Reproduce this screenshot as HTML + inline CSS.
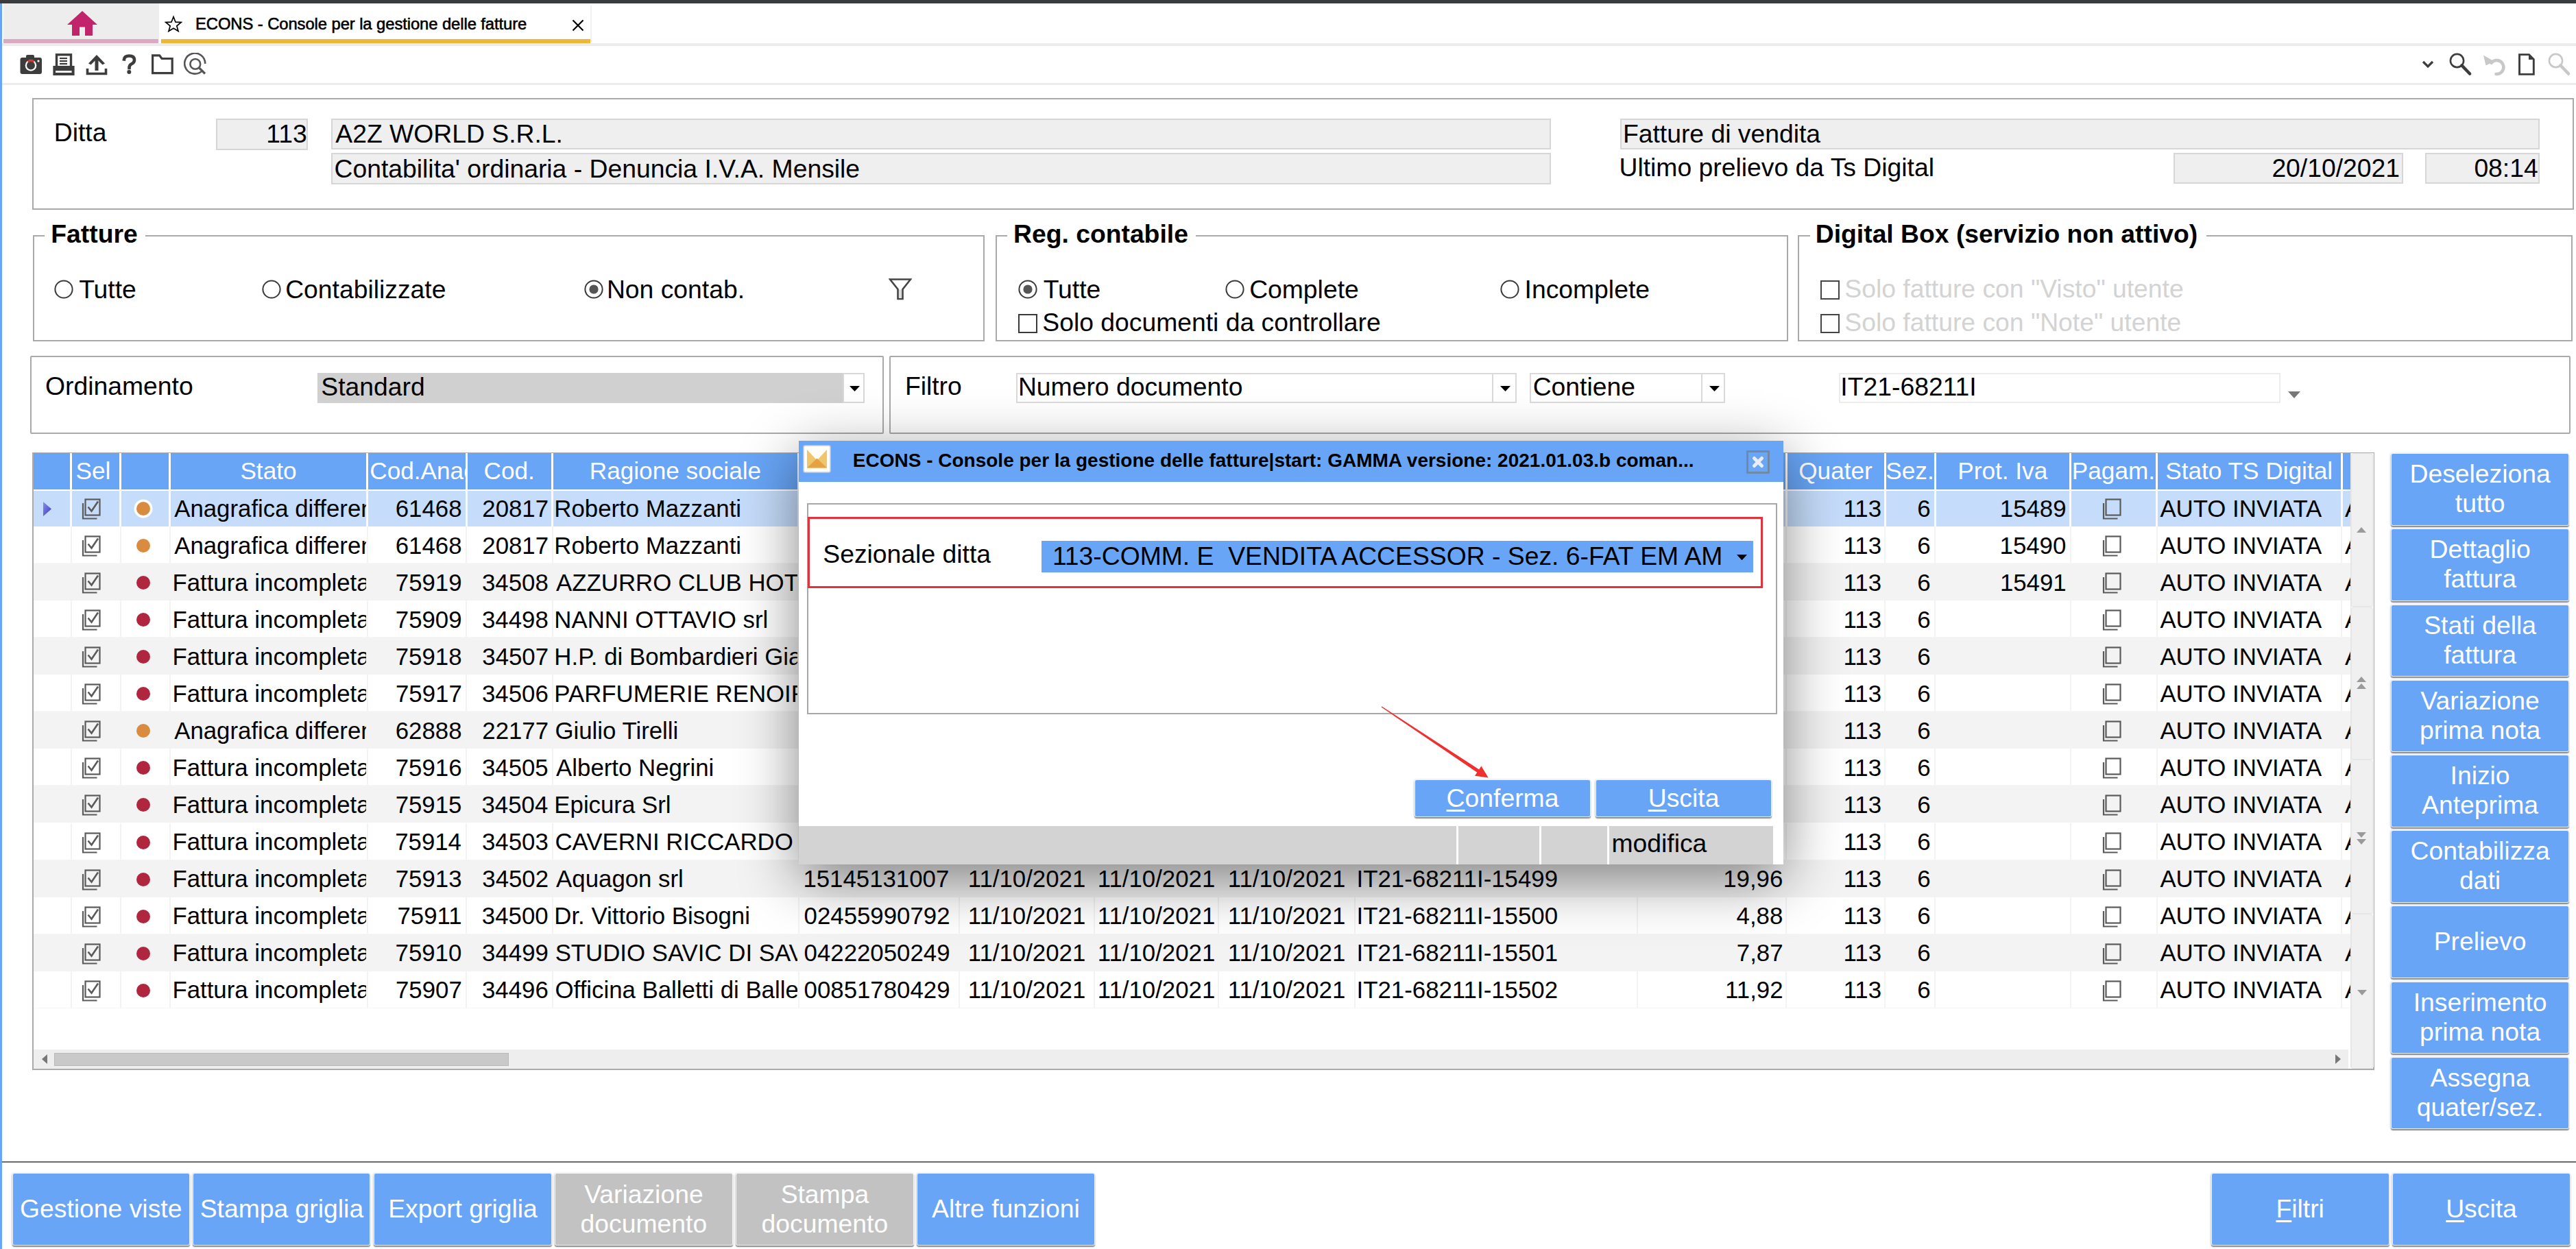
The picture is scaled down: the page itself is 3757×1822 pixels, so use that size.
<!DOCTYPE html>
<html><head><meta charset="utf-8"><title>ECONS</title>
<style>
html,body{margin:0;padding:0;background:#fff;width:3757px;height:1822px;overflow:hidden;}
body{position:relative;font-family:"Liberation Sans",sans-serif;}
.r{position:absolute;display:block;}
.t{position:absolute;white-space:nowrap;line-height:1;}
</style></head><body>
<div class="r" style="left:0.00px;top:0.00px;width:3757.00px;height:5.00px;background:#3a3b3d"></div>
<div class="r" style="left:0.00px;top:5.00px;width:3.00px;height:1817.00px;background:#68a5f6"></div>
<div class="r" style="left:5.00px;top:5.00px;width:227.00px;height:52.00px;background:#ededed"></div>
<div class="r" style="left:5.00px;top:57.00px;width:226.00px;height:5.50px;background:#dba9c0"></div>
<div class="r" style="left:235.00px;top:57.00px;width:625.50px;height:5.50px;background:#efb736"></div>
<div class="r" style="left:861.00px;top:8.00px;width:2.00px;height:54.00px;background:#f0f0f0"></div>
<div class="r" style="left:3.00px;top:62.50px;width:3754.00px;height:4.00px;background:#ececec"></div>
<svg class="r" style="left:96px;top:14px;" width="48" height="40" viewBox="0 0 48 40"><path d="M24 2 L46 22 L39 22 L39 38 L28 38 L28 25.6 L20 25.6 L20 38 L9 38 L9 22 L2 22 Z" fill="#c2246b"/></svg>
<svg class="r" style="left:240px;top:22px;" width="26" height="25" viewBox="0 0 26 25"><path d="M13 2.5 L16 10.2 L24.2 10.6 L17.8 15.8 L20 23.5 L13 19.2 L6 23.5 L8.2 15.8 L1.8 10.6 L10 10.2 Z" fill="none" stroke="#000" stroke-width="1.7" stroke-linejoin="miter"/></svg>
<div class="t" style="left:285.30px;top:23.46px;font-size:24.5px;color:#000;-webkit-text-stroke:0.6px #000;letter-spacing:-0.1px;transform:scaleX(0.973);transform-origin:0 0">ECONS - Console per la gestione delle fatture</div>
<svg class="r" style="left:833px;top:27px;" width="20" height="20" viewBox="0 0 20 20"><path d="M2.5 2.5 L17.5 17.5 M17.5 2.5 L2.5 17.5" stroke="#000" stroke-width="2.2"/></svg>
<svg class="r" style="left:29px;top:79px;" width="33" height="30" viewBox="0 0 33 30"><rect x="0.5" y="5" width="31.5" height="24" rx="3" fill="#3d3d3d"/><rect x="9" y="1" width="12" height="6" rx="2" fill="#3d3d3d"/><circle cx="16" cy="16.5" r="8.3" fill="#fff"/><circle cx="16" cy="16.5" r="6" fill="#3d3d3d"/><path d="M11 9.5 Q16 7 21 9.5 L20 12 Q16 10.5 12 12 Z" fill="#d0312d"/><circle cx="27" cy="10" r="1.6" fill="#fff"/></svg>
<svg class="r" style="left:77px;top:78px;" width="32" height="32" viewBox="0 0 32 32"><rect x="5.5" y="1.8" width="21" height="19" fill="none" stroke="#3d3d3d" stroke-width="3.4"/><rect x="10" y="6" width="11" height="2.2" fill="#3d3d3d"/><rect x="10" y="10" width="11" height="2.2" fill="#3d3d3d"/><rect x="10" y="14" width="11" height="2.2" fill="#3d3d3d"/><path d="M0.4 18 H31.6 V32 H0.4 Z M4 25.2 V28 H27.6 V25.2 Z" fill="#3d3d3d" fill-rule="evenodd"/></svg>
<svg class="r" style="left:125px;top:79px;" width="32" height="31" viewBox="0 0 32 31"><path d="M16 1 L28 13.5 L24.5 15.5 L18.5 9.5 L18.5 24 L13.5 24 L13.5 9.5 L7.5 15.5 L4 13.5 Z" fill="#3d3d3d"/><path d="M2.5 21 V28.5 H29.5 V21" fill="none" stroke="#3d3d3d" stroke-width="3.6"/></svg>
<svg class="r" style="left:176px;top:78px;" width="26" height="31" viewBox="0 0 26 31"><path d="M5 8.5 Q5.5 3.5 12.5 3.5 Q20 3.5 20 9.5 Q20 13.5 15.5 15.5 Q12.5 17 12.5 21" fill="none" stroke="#3d3d3d" stroke-width="4.6" stroke-linecap="square"/><circle cx="12.3" cy="27" r="3" fill="#3d3d3d"/></svg>
<svg class="r" style="left:221px;top:79px;" width="32" height="30" viewBox="0 0 32 30"><path d="M1.6 1.8 H11.6 L15 6.5 H30.2 V27.6 H1.6 Z" fill="none" stroke="#3d3d3d" stroke-width="3.2" stroke-linejoin="miter"/></svg>
<svg class="r" style="left:268px;top:77px;" width="34" height="33" viewBox="0 0 34 33"><path d="M27.5 25.5 A15 15 0 1 1 31.2 16" fill="none" stroke="#555" stroke-width="2.6"/><circle cx="16.8" cy="16.4" r="7.4" fill="none" stroke="#555" stroke-width="2.6"/><path d="M22 21.5 L31 30.5" stroke="#555" stroke-width="3.2"/></svg>
<svg class="r" style="left:3531px;top:87px;" width="20" height="14" viewBox="0 0 20 14"><path d="M3 3 L10 10 L17 3" fill="none" stroke="#3d3d3d" stroke-width="3.2"/></svg>
<svg class="r" style="left:3571px;top:77px;" width="36" height="34" viewBox="0 0 36 34"><circle cx="12.5" cy="11.5" r="9.6" fill="none" stroke="#3d3d3d" stroke-width="2.6"/><path d="M19.5 18.5 L31 30.5" stroke="#3d3d3d" stroke-width="4.6" stroke-linecap="round"/></svg>
<svg class="r" style="left:3619px;top:77px;" width="36" height="34" viewBox="0 0 36 34"><path d="M14.5 14.8 A10 10 0 1 1 21.5 31" fill="none" stroke="#c8c8c8" stroke-width="4.6" stroke-linecap="round"/><path d="M3 3.5 L6.5 18.5 L18.5 12.5 Z" fill="#c8c8c8"/></svg>
<svg class="r" style="left:3671px;top:77px;" width="28" height="34" viewBox="0 0 28 34"><path d="M3.5 2.6 H17.5 L24.3 9.5 V31.4 H3.5 Z" fill="none" stroke="#3d3d3d" stroke-width="2.9" stroke-linejoin="miter"/><path d="M17 2 L25 10 L17 10 Z" fill="#3d3d3d"/></svg>
<svg class="r" style="left:3715px;top:77px;" width="36" height="34" viewBox="0 0 36 34"><circle cx="12.5" cy="11.5" r="9.6" fill="none" stroke="#c8c8c8" stroke-width="2.6"/><path d="M19.5 18.5 L31 30.5" stroke="#c8c8c8" stroke-width="4.6" stroke-linecap="round"/></svg>
<div class="r" style="left:3.00px;top:121.00px;width:3754.00px;height:2.50px;background:#ececec"></div>
<div class="r" style="left:47.00px;top:143.00px;width:3707.00px;height:163.00px;border:2px solid #a9a9a9;box-sizing:border-box"></div>
<div class="t" style="left:78.72px;top:175.43px;font-size:37.3px;color:#000;">Ditta</div>
<div class="r" style="left:315.00px;top:173.20px;width:133.80px;height:45.50px;background:#efefef;border:2px solid #d6d6d6;box-sizing:border-box"></div>
<div class="t" style="left:388.19px;top:177.43px;font-size:37.3px;color:#000;">113</div>
<div class="r" style="left:483.20px;top:173.20px;width:1778.80px;height:45.30px;background:#efefef;border:2px solid #d6d6d6;box-sizing:border-box"></div>
<div class="t" style="left:489.31px;top:177.43px;font-size:37.3px;color:#000;">A2Z WORLD S.R.L.</div>
<div class="r" style="left:483.20px;top:223.20px;width:1778.80px;height:45.50px;background:#efefef;border:2px solid #d6d6d6;box-sizing:border-box"></div>
<div class="t" style="left:487.53px;top:227.63px;font-size:37.3px;color:#000;">Contabilita&#x27; ordinaria - Denuncia I.V.A. Mensile</div>
<div class="r" style="left:2363.00px;top:173.40px;width:1341.20px;height:44.60px;background:#efefef;border:2px solid #d6d6d6;box-sizing:border-box"></div>
<div class="t" style="left:2366.92px;top:177.23px;font-size:37.3px;color:#000;">Fatture di vendita</div>
<div class="t" style="left:2361.51px;top:226.23px;font-size:37.3px;color:#000;">Ultimo prelievo da Ts Digital</div>
<div class="r" style="left:3169.60px;top:223.20px;width:335.00px;height:45.20px;background:#efefef;border:2px solid #d6d6d6;box-sizing:border-box"></div>
<div class="t" style="left:3313.39px;top:227.43px;font-size:37.3px;color:#000;">20/10/2021</div>
<div class="r" style="left:3537.20px;top:223.20px;width:167.00px;height:45.20px;background:#efefef;border:2px solid #d6d6d6;box-sizing:border-box"></div>
<div class="t" style="left:3608.38px;top:227.43px;font-size:37.3px;color:#000;">08:14</div>
<div class="r" style="left:47.70px;top:343.00px;width:1388.30px;height:154.50px;border:2px solid #a9a9a9;box-sizing:border-box"></div>
<div class="r" style="left:64.70px;top:340.00px;width:147.30px;height:7.00px;background:#fff"></div>
<div class="t" style="left:74.28px;top:323.43px;font-size:37.3px;color:#000;font-weight:bold;">Fatture</div>
<div class="r" style="left:1451.60px;top:343.00px;width:1156.40px;height:154.50px;border:2px solid #a9a9a9;box-sizing:border-box"></div>
<div class="r" style="left:1469.00px;top:340.00px;width:274.70px;height:7.00px;background:#fff"></div>
<div class="t" style="left:1477.98px;top:323.43px;font-size:37.3px;color:#000;font-weight:bold;">Reg. contabile</div>
<div class="r" style="left:2621.60px;top:343.00px;width:1130.40px;height:154.50px;border:2px solid #a9a9a9;box-sizing:border-box"></div>
<div class="r" style="left:2639.50px;top:340.00px;width:578.00px;height:7.00px;background:#fff"></div>
<div class="t" style="left:2647.78px;top:323.43px;font-size:37.3px;color:#000;font-weight:bold;">Digital Box (servizio non attivo)</div>
<svg class="r" style="left:79.0px;top:407.8px;" width="28" height="28" viewBox="0 0 28 28"><circle cx="14" cy="14" r="12.6" fill="#fff" stroke="#3a3a3a" stroke-width="2"/></svg>
<div class="t" style="left:115.16px;top:403.63px;font-size:37.3px;color:#000;">Tutte</div>
<svg class="r" style="left:381.5px;top:407.8px;" width="28" height="28" viewBox="0 0 28 28"><circle cx="14" cy="14" r="12.6" fill="#fff" stroke="#3a3a3a" stroke-width="2"/></svg>
<div class="t" style="left:416.13px;top:403.63px;font-size:37.3px;color:#000;">Contabilizzate</div>
<svg class="r" style="left:851.5px;top:407.8px;" width="28" height="28" viewBox="0 0 28 28"><circle cx="14" cy="14" r="12.6" fill="#fff" stroke="#3a3a3a" stroke-width="2"/><circle cx="14" cy="14" r="6.6" fill="#555"/></svg>
<div class="t" style="left:884.92px;top:403.63px;font-size:37.3px;color:#000;">Non contab.</div>
<svg class="r" style="left:1296px;top:405px;" width="34" height="34" viewBox="0 0 34 34"><path d="M2 2.5 H32 L20.5 17 V31 H13.5 V17 Z" fill="none" stroke="#444" stroke-width="2.6" stroke-linejoin="miter"/><path d="M15 17.5 H19 V30 H15 Z" fill="#ddd"/></svg>
<svg class="r" style="left:1484.5px;top:407.8px;" width="28" height="28" viewBox="0 0 28 28"><circle cx="14" cy="14" r="12.6" fill="#fff" stroke="#3a3a3a" stroke-width="2"/><circle cx="14" cy="14" r="6.6" fill="#555"/></svg>
<div class="t" style="left:1521.66px;top:403.63px;font-size:37.3px;color:#000;">Tutte</div>
<svg class="r" style="left:1786.5px;top:407.8px;" width="28" height="28" viewBox="0 0 28 28"><circle cx="14" cy="14" r="12.6" fill="#fff" stroke="#3a3a3a" stroke-width="2"/></svg>
<div class="t" style="left:1822.13px;top:403.63px;font-size:37.3px;color:#000;">Complete</div>
<svg class="r" style="left:2188.1px;top:407.8px;" width="28" height="28" viewBox="0 0 28 28"><circle cx="14" cy="14" r="12.6" fill="#fff" stroke="#3a3a3a" stroke-width="2"/></svg>
<div class="t" style="left:2223.55px;top:403.63px;font-size:37.3px;color:#000;">Incomplete</div>
<svg class="r" style="left:1485px;top:458px;" width="28" height="28" viewBox="0 0 28 28"><rect x="1" y="1" width="26" height="26" fill="#fff" stroke="#3a3a3a" stroke-width="2"/></svg>
<div class="t" style="left:1520.32px;top:451.93px;font-size:37.3px;color:#000;">Solo documenti da controllare</div>
<svg class="r" style="left:2655px;top:408.5px;" width="28" height="28" viewBox="0 0 28 28"><rect x="1" y="1" width="26" height="26" fill="#fff" stroke="#444" stroke-width="2"/></svg>
<div class="t" style="left:2690.32px;top:402.93px;font-size:37.3px;color:#d3d3d3;">Solo fatture con &quot;Visto&quot; utente</div>
<svg class="r" style="left:2655px;top:458px;" width="28" height="28" viewBox="0 0 28 28"><rect x="1" y="1" width="26" height="26" fill="#fff" stroke="#444" stroke-width="2"/></svg>
<div class="t" style="left:2690.32px;top:451.93px;font-size:37.3px;color:#d3d3d3;">Solo fatture con &quot;Note&quot; utente</div>
<div class="r" style="left:43.60px;top:519.00px;width:1245.00px;height:113.80px;border:2px solid #a9a9a9;box-sizing:border-box;border-radius:2px"></div>
<div class="t" style="left:66.03px;top:545.13px;font-size:37.3px;color:#000;">Ordinamento</div>
<div class="r" style="left:463.00px;top:544.00px;width:798.40px;height:44.30px;background:#d0d0d0"></div>
<div class="r" style="left:1228.60px;top:544.00px;width:32.80px;height:44.30px;background:#fff;border:2px solid #d8d8d8;box-sizing:border-box"></div>
<svg class="r" style="left:1238.7px;top:563px;" width="15" height="8" viewBox="0 0 15 8"><path d="M0 0 H15 L7.5 8 Z" fill="#000"/></svg>
<div class="t" style="left:468.32px;top:546.43px;font-size:37.3px;color:#000;">Standard</div>
<div class="r" style="left:1296.80px;top:519.00px;width:2452.20px;height:113.80px;border:2px solid #a9a9a9;box-sizing:border-box;border-radius:2px"></div>
<div class="t" style="left:1319.92px;top:544.93px;font-size:37.3px;color:#000;">Filtro</div>
<div class="r" style="left:1481.90px;top:544.00px;width:730.10px;height:44.30px;background:#fff;border:2px solid #dadada;box-sizing:border-box"></div>
<div class="r" style="left:2176.00px;top:544.00px;width:2.00px;height:44.30px;background:#dadada"></div>
<svg class="r" style="left:2188.4px;top:563px;" width="15" height="8" viewBox="0 0 15 8"><path d="M0 0 H15 L7.5 8 Z" fill="#000"/></svg>
<div class="t" style="left:1484.92px;top:546.43px;font-size:37.3px;color:#000;">Numero documento</div>
<div class="r" style="left:2231.00px;top:544.00px;width:285.40px;height:44.30px;background:#fff;border:2px solid #dadada;box-sizing:border-box"></div>
<div class="r" style="left:2481.00px;top:544.00px;width:2.00px;height:44.30px;background:#dadada"></div>
<svg class="r" style="left:2492.7px;top:563px;" width="15" height="8" viewBox="0 0 15 8"><path d="M0 0 H15 L7.5 8 Z" fill="#000"/></svg>
<div class="t" style="left:2235.64px;top:546.43px;font-size:37.3px;color:#000;">Contiene</div>
<div class="r" style="left:2681.70px;top:544.00px;width:644.10px;height:44.30px;background:#fff;border:2px solid #ececec;box-sizing:border-box"></div>
<div class="t" style="left:2684.35px;top:546.43px;font-size:37.3px;color:#000;">IT21-68211I</div>
<svg class="r" style="left:3337.4px;top:570.6px;" width="18" height="10" viewBox="0 0 18 10"><path d="M0 0 H18 L9.0 10 Z" fill="#777"/></svg>
<div class="r" style="left:46.50px;top:659.50px;width:3416.00px;height:901.00px;border:2px solid #ababab;box-sizing:border-box;background:#fff"></div>
<div class="r" style="left:49.00px;top:661.00px;width:3380.00px;height:52.50px;background:#68a5f6"></div>
<div class="r" style="left:102.00px;top:661.00px;width:3.00px;height:55.00px;background:#fff"></div>
<div class="r" style="left:174.00px;top:661.00px;width:3.00px;height:55.00px;background:#fff"></div>
<div class="r" style="left:246.00px;top:661.00px;width:3.00px;height:55.00px;background:#fff"></div>
<div class="r" style="left:534.00px;top:661.00px;width:3.00px;height:55.00px;background:#fff"></div>
<div class="r" style="left:678.50px;top:661.00px;width:3.00px;height:55.00px;background:#fff"></div>
<div class="r" style="left:804.00px;top:661.00px;width:3.00px;height:55.00px;background:#fff"></div>
<div class="r" style="left:1163.00px;top:661.00px;width:3.00px;height:55.00px;background:#fff"></div>
<div class="r" style="left:1397.50px;top:661.00px;width:3.00px;height:55.00px;background:#fff"></div>
<div class="r" style="left:1594.50px;top:661.00px;width:3.00px;height:55.00px;background:#fff"></div>
<div class="r" style="left:1775.50px;top:661.00px;width:3.00px;height:55.00px;background:#fff"></div>
<div class="r" style="left:1974.50px;top:661.00px;width:3.00px;height:55.00px;background:#fff"></div>
<div class="r" style="left:2386.50px;top:661.00px;width:3.00px;height:55.00px;background:#fff"></div>
<div class="r" style="left:2603.50px;top:661.00px;width:3.00px;height:55.00px;background:#fff"></div>
<div class="r" style="left:2747.50px;top:661.00px;width:3.00px;height:55.00px;background:#fff"></div>
<div class="r" style="left:2820.50px;top:661.00px;width:3.00px;height:55.00px;background:#fff"></div>
<div class="r" style="left:3018.00px;top:661.00px;width:3.00px;height:55.00px;background:#fff"></div>
<div class="r" style="left:3144.00px;top:661.00px;width:3.00px;height:55.00px;background:#fff"></div>
<div class="r" style="left:3413.50px;top:661.00px;width:3.00px;height:55.00px;background:#fff"></div>
<div class="r" style="left:49.00px;top:713.50px;width:3380.00px;height:2.50px;background:#fff"></div>
<div class="t" style="left:105.00px;top:668.70px;width:69.00px;height:42px;overflow:hidden;font-size:35.2px;color:#fff"><span style="position:absolute;top:0;left:5.42px">Sel</span></div>
<div class="t" style="left:249.00px;top:668.70px;width:285.00px;height:42px;overflow:hidden;font-size:35.2px;color:#fff"><span style="position:absolute;top:0;left:101.40px">Stato</span></div>
<div class="t" style="left:537.00px;top:668.70px;width:141.50px;height:42px;overflow:hidden;font-size:35.2px;color:#fff"><span style="position:absolute;top:0;left:2.24px">Cod.Anag</span></div>
<div class="t" style="left:681.50px;top:668.70px;width:122.50px;height:42px;overflow:hidden;font-size:35.2px;color:#fff"><span style="position:absolute;top:0;left:24.07px">Cod.</span></div>
<div class="t" style="left:807.00px;top:668.70px;width:356.00px;height:42px;overflow:hidden;font-size:35.2px;color:#fff"><span style="position:absolute;top:0;left:52.76px">Ragione sociale</span></div>
<div class="t" style="left:2606.50px;top:668.70px;width:141.00px;height:42px;overflow:hidden;font-size:35.2px;color:#fff"><span style="position:absolute;top:0;left:16.69px">Quater</span></div>
<div class="t" style="left:2750.50px;top:668.70px;width:70.00px;height:42px;overflow:hidden;font-size:35.2px;color:#fff"><span style="position:absolute;top:0;left:-0.22px">Sez.</span></div>
<div class="t" style="left:2823.50px;top:668.70px;width:194.50px;height:42px;overflow:hidden;font-size:35.2px;color:#fff"><span style="position:absolute;top:0;left:31.71px">Prot. Iva</span></div>
<div class="t" style="left:3021.00px;top:668.70px;width:123.00px;height:42px;overflow:hidden;font-size:35.2px;color:#fff"><span style="position:absolute;top:0;left:0.84px">Pagam.</span></div>
<div class="t" style="left:3147.00px;top:668.70px;width:266.50px;height:42px;overflow:hidden;font-size:35.2px;color:#fff"><span style="position:absolute;top:0;left:11.29px">Stato TS Digital</span></div>
<div class="r" style="left:49.00px;top:716.00px;width:3380.00px;height:51.70px;background:#c5dcfa"></div>
<div class="r" style="left:102.00px;top:716.00px;width:3.00px;height:51.70px;background:#fff;opacity:0.85"></div>
<div class="r" style="left:174.00px;top:716.00px;width:3.00px;height:51.70px;background:#fff;opacity:0.85"></div>
<div class="r" style="left:246.00px;top:716.00px;width:3.00px;height:51.70px;background:#fff;opacity:0.85"></div>
<div class="r" style="left:534.00px;top:716.00px;width:3.00px;height:51.70px;background:#fff;opacity:0.85"></div>
<div class="r" style="left:678.50px;top:716.00px;width:3.00px;height:51.70px;background:#fff;opacity:0.85"></div>
<div class="r" style="left:804.00px;top:716.00px;width:3.00px;height:51.70px;background:#fff;opacity:0.85"></div>
<div class="r" style="left:1163.00px;top:716.00px;width:3.00px;height:51.70px;background:#fff;opacity:0.85"></div>
<div class="r" style="left:1397.50px;top:716.00px;width:3.00px;height:51.70px;background:#fff;opacity:0.85"></div>
<div class="r" style="left:1594.50px;top:716.00px;width:3.00px;height:51.70px;background:#fff;opacity:0.85"></div>
<div class="r" style="left:1775.50px;top:716.00px;width:3.00px;height:51.70px;background:#fff;opacity:0.85"></div>
<div class="r" style="left:1974.50px;top:716.00px;width:3.00px;height:51.70px;background:#fff;opacity:0.85"></div>
<div class="r" style="left:2386.50px;top:716.00px;width:3.00px;height:51.70px;background:#fff;opacity:0.85"></div>
<div class="r" style="left:2603.50px;top:716.00px;width:3.00px;height:51.70px;background:#fff;opacity:0.85"></div>
<div class="r" style="left:2747.50px;top:716.00px;width:3.00px;height:51.70px;background:#fff;opacity:0.85"></div>
<div class="r" style="left:2820.50px;top:716.00px;width:3.00px;height:51.70px;background:#fff;opacity:0.85"></div>
<div class="r" style="left:3018.00px;top:716.00px;width:3.00px;height:51.70px;background:#fff;opacity:0.85"></div>
<div class="r" style="left:3144.00px;top:716.00px;width:3.00px;height:51.70px;background:#fff;opacity:0.85"></div>
<div class="r" style="left:3413.50px;top:716.00px;width:3.00px;height:51.70px;background:#fff;opacity:0.85"></div>
<svg class="r" style="left:62px;top:731px;" width="14" height="23" viewBox="0 0 14 23"><defs><linearGradient id="tg" x1="0" y1="0" x2="1" y2="1"><stop offset="0" stop-color="#8a8cf0"/><stop offset="1" stop-color="#3a3ac0"/></linearGradient></defs><path d="M1 1 L13 11.5 L1 22 Z" fill="url(#tg)"/></svg>
<svg class="r" style="left:117px;top:725.6px;" width="32" height="33" viewBox="0 0 32 33"><path d="M4 8 V30.5 H24.5" fill="none" stroke="#5a5a5a" stroke-width="2.2"/><rect x="7.5" y="2.5" width="21" height="23" fill="none" stroke="#5a5a5a" stroke-width="2.2"/><path d="M11.5 13.5 L16.5 19.5 L26 5.5" fill="none" stroke="#5a5a5a" stroke-width="2.6"/></svg>
<svg class="r" style="left:194.5px;top:727.6px;" width="28" height="28" viewBox="0 0 28 28"><circle cx="14" cy="14" r="13.5" fill="#fff"/><circle cx="14" cy="14" r="10" fill="#d98b3f"/></svg>
<div class="t" style="left:249.00px;top:724.54px;width:285.00px;height:42px;overflow:hidden;font-size:34.8px;color:#000"><span style="position:absolute;top:0;left:5.21px">Anagrafica differenze</span></div>
<div class="t" style="left:537.00px;top:724.54px;width:141.50px;height:42px;overflow:hidden;font-size:34.8px;color:#000"><span style="position:absolute;top:0;left:39.74px">61468</span></div>
<div class="t" style="left:681.50px;top:724.54px;width:122.50px;height:42px;overflow:hidden;font-size:34.8px;color:#000"><span style="position:absolute;top:0;left:21.80px">20817</span></div>
<div class="t" style="left:807.00px;top:724.54px;width:356.00px;height:42px;overflow:hidden;font-size:34.8px;color:#000"><span style="position:absolute;top:0;left:1.33px">Roberto Mazzanti</span></div>
<div class="t" style="left:2606.50px;top:724.54px;width:141.00px;height:42px;overflow:hidden;font-size:34.8px;color:#000"><span style="position:absolute;top:0;left:82.06px">113</span></div>
<div class="t" style="left:2750.50px;top:724.54px;width:70.00px;height:42px;overflow:hidden;font-size:34.8px;color:#000"><span style="position:absolute;top:0;left:45.66px">6</span></div>
<div class="t" style="left:2823.50px;top:724.54px;width:194.50px;height:42px;overflow:hidden;font-size:34.8px;color:#000"><span style="position:absolute;top:0;left:93.32px">15489</span></div>
<svg class="r" style="left:3064px;top:725.6px;" width="32" height="33" viewBox="0 0 32 33"><path d="M4 8 V30.5 H24.5" fill="none" stroke="#5a5a5a" stroke-width="2.2"/><rect x="7.5" y="2.5" width="21" height="23" fill="none" stroke="#5a5a5a" stroke-width="2.2"/></svg>
<div class="t" style="left:3147.00px;top:724.54px;width:266.50px;height:42px;overflow:hidden;font-size:34.8px;color:#000"><span style="position:absolute;top:0;left:3.41px">AUTO INVIATA</span></div>
<div class="t" style="left:3416.50px;top:724.54px;width:11.00px;height:42px;overflow:hidden;font-size:34.8px;color:#000"><span style="position:absolute;top:0;left:3.41px">AUTO</span></div>
<div class="r" style="left:102.50px;top:767.70px;width:2.00px;height:54.10px;background:#f3f3f3"></div>
<div class="r" style="left:174.50px;top:767.70px;width:2.00px;height:54.10px;background:#f3f3f3"></div>
<div class="r" style="left:246.50px;top:767.70px;width:2.00px;height:54.10px;background:#f3f3f3"></div>
<div class="r" style="left:534.50px;top:767.70px;width:2.00px;height:54.10px;background:#f3f3f3"></div>
<div class="r" style="left:679.00px;top:767.70px;width:2.00px;height:54.10px;background:#f3f3f3"></div>
<div class="r" style="left:804.50px;top:767.70px;width:2.00px;height:54.10px;background:#f3f3f3"></div>
<div class="r" style="left:1163.50px;top:767.70px;width:2.00px;height:54.10px;background:#f3f3f3"></div>
<div class="r" style="left:1398.00px;top:767.70px;width:2.00px;height:54.10px;background:#f3f3f3"></div>
<div class="r" style="left:1595.00px;top:767.70px;width:2.00px;height:54.10px;background:#f3f3f3"></div>
<div class="r" style="left:1776.00px;top:767.70px;width:2.00px;height:54.10px;background:#f3f3f3"></div>
<div class="r" style="left:1975.00px;top:767.70px;width:2.00px;height:54.10px;background:#f3f3f3"></div>
<div class="r" style="left:2387.00px;top:767.70px;width:2.00px;height:54.10px;background:#f3f3f3"></div>
<div class="r" style="left:2604.00px;top:767.70px;width:2.00px;height:54.10px;background:#f3f3f3"></div>
<div class="r" style="left:2748.00px;top:767.70px;width:2.00px;height:54.10px;background:#f3f3f3"></div>
<div class="r" style="left:2821.00px;top:767.70px;width:2.00px;height:54.10px;background:#f3f3f3"></div>
<div class="r" style="left:3018.50px;top:767.70px;width:2.00px;height:54.10px;background:#f3f3f3"></div>
<div class="r" style="left:3144.50px;top:767.70px;width:2.00px;height:54.10px;background:#f3f3f3"></div>
<div class="r" style="left:3414.00px;top:767.70px;width:2.00px;height:54.10px;background:#f3f3f3"></div>
<div class="r" style="left:49.00px;top:820.80px;width:3380.00px;height:1.00px;background:#f6f6f6"></div>
<svg class="r" style="left:117px;top:779.7px;" width="32" height="33" viewBox="0 0 32 33"><path d="M4 8 V30.5 H24.5" fill="none" stroke="#5a5a5a" stroke-width="2.2"/><rect x="7.5" y="2.5" width="21" height="23" fill="none" stroke="#5a5a5a" stroke-width="2.2"/><path d="M11.5 13.5 L16.5 19.5 L26 5.5" fill="none" stroke="#5a5a5a" stroke-width="2.6"/></svg>
<svg class="r" style="left:194.5px;top:781.7px;" width="28" height="28" viewBox="0 0 28 28"><circle cx="14" cy="14" r="10" fill="#d98b3f"/></svg>
<div class="t" style="left:249.00px;top:778.59px;width:285.00px;height:42px;overflow:hidden;font-size:34.8px;color:#000"><span style="position:absolute;top:0;left:5.21px">Anagrafica differenze</span></div>
<div class="t" style="left:537.00px;top:778.59px;width:141.50px;height:42px;overflow:hidden;font-size:34.8px;color:#000"><span style="position:absolute;top:0;left:39.74px">61468</span></div>
<div class="t" style="left:681.50px;top:778.59px;width:122.50px;height:42px;overflow:hidden;font-size:34.8px;color:#000"><span style="position:absolute;top:0;left:21.80px">20817</span></div>
<div class="t" style="left:807.00px;top:778.59px;width:356.00px;height:42px;overflow:hidden;font-size:34.8px;color:#000"><span style="position:absolute;top:0;left:1.33px">Roberto Mazzanti</span></div>
<div class="t" style="left:2606.50px;top:778.59px;width:141.00px;height:42px;overflow:hidden;font-size:34.8px;color:#000"><span style="position:absolute;top:0;left:82.06px">113</span></div>
<div class="t" style="left:2750.50px;top:778.59px;width:70.00px;height:42px;overflow:hidden;font-size:34.8px;color:#000"><span style="position:absolute;top:0;left:45.66px">6</span></div>
<div class="t" style="left:2823.50px;top:778.59px;width:194.50px;height:42px;overflow:hidden;font-size:34.8px;color:#000"><span style="position:absolute;top:0;left:93.06px">15490</span></div>
<svg class="r" style="left:3064px;top:779.7px;" width="32" height="33" viewBox="0 0 32 33"><path d="M4 8 V30.5 H24.5" fill="none" stroke="#5a5a5a" stroke-width="2.2"/><rect x="7.5" y="2.5" width="21" height="23" fill="none" stroke="#5a5a5a" stroke-width="2.2"/></svg>
<div class="t" style="left:3147.00px;top:778.59px;width:266.50px;height:42px;overflow:hidden;font-size:34.8px;color:#000"><span style="position:absolute;top:0;left:3.41px">AUTO INVIATA</span></div>
<div class="t" style="left:3416.50px;top:778.59px;width:11.00px;height:42px;overflow:hidden;font-size:34.8px;color:#000"><span style="position:absolute;top:0;left:3.41px">AUTO</span></div>
<div class="r" style="left:49.00px;top:821.80px;width:3380.00px;height:54.10px;background:#f3f3f3"></div>
<svg class="r" style="left:117px;top:833.8000000000001px;" width="32" height="33" viewBox="0 0 32 33"><path d="M4 8 V30.5 H24.5" fill="none" stroke="#5a5a5a" stroke-width="2.2"/><rect x="7.5" y="2.5" width="21" height="23" fill="none" stroke="#5a5a5a" stroke-width="2.2"/><path d="M11.5 13.5 L16.5 19.5 L26 5.5" fill="none" stroke="#5a5a5a" stroke-width="2.6"/></svg>
<svg class="r" style="left:194.5px;top:835.8000000000001px;" width="28" height="28" viewBox="0 0 28 28"><circle cx="14" cy="14" r="10" fill="#b1263f"/></svg>
<div class="t" style="left:249.00px;top:832.64px;width:285.00px;height:42px;overflow:hidden;font-size:34.8px;color:#000"><span style="position:absolute;top:0;left:2.43px">Fattura incompleta</span></div>
<div class="t" style="left:537.00px;top:832.64px;width:141.50px;height:42px;overflow:hidden;font-size:34.8px;color:#000"><span style="position:absolute;top:0;left:39.82px">75919</span></div>
<div class="t" style="left:681.50px;top:832.64px;width:122.50px;height:42px;overflow:hidden;font-size:34.8px;color:#000"><span style="position:absolute;top:0;left:21.53px">34508</span></div>
<div class="t" style="left:807.00px;top:832.64px;width:356.00px;height:42px;overflow:hidden;font-size:34.8px;color:#000"><span style="position:absolute;top:0;left:4.11px">AZZURRO CLUB HOTEL</span></div>
<div class="t" style="left:2606.50px;top:832.64px;width:141.00px;height:42px;overflow:hidden;font-size:34.8px;color:#000"><span style="position:absolute;top:0;left:82.06px">113</span></div>
<div class="t" style="left:2750.50px;top:832.64px;width:70.00px;height:42px;overflow:hidden;font-size:34.8px;color:#000"><span style="position:absolute;top:0;left:45.66px">6</span></div>
<div class="t" style="left:2823.50px;top:832.64px;width:194.50px;height:42px;overflow:hidden;font-size:34.8px;color:#000"><span style="position:absolute;top:0;left:93.41px">15491</span></div>
<svg class="r" style="left:3064px;top:833.8000000000001px;" width="32" height="33" viewBox="0 0 32 33"><path d="M4 8 V30.5 H24.5" fill="none" stroke="#5a5a5a" stroke-width="2.2"/><rect x="7.5" y="2.5" width="21" height="23" fill="none" stroke="#5a5a5a" stroke-width="2.2"/></svg>
<div class="t" style="left:3147.00px;top:832.64px;width:266.50px;height:42px;overflow:hidden;font-size:34.8px;color:#000"><span style="position:absolute;top:0;left:3.41px">AUTO INVIATA</span></div>
<div class="t" style="left:3416.50px;top:832.64px;width:11.00px;height:42px;overflow:hidden;font-size:34.8px;color:#000"><span style="position:absolute;top:0;left:3.41px">AUTO</span></div>
<div class="r" style="left:102.50px;top:875.90px;width:2.00px;height:54.10px;background:#f3f3f3"></div>
<div class="r" style="left:174.50px;top:875.90px;width:2.00px;height:54.10px;background:#f3f3f3"></div>
<div class="r" style="left:246.50px;top:875.90px;width:2.00px;height:54.10px;background:#f3f3f3"></div>
<div class="r" style="left:534.50px;top:875.90px;width:2.00px;height:54.10px;background:#f3f3f3"></div>
<div class="r" style="left:679.00px;top:875.90px;width:2.00px;height:54.10px;background:#f3f3f3"></div>
<div class="r" style="left:804.50px;top:875.90px;width:2.00px;height:54.10px;background:#f3f3f3"></div>
<div class="r" style="left:1163.50px;top:875.90px;width:2.00px;height:54.10px;background:#f3f3f3"></div>
<div class="r" style="left:1398.00px;top:875.90px;width:2.00px;height:54.10px;background:#f3f3f3"></div>
<div class="r" style="left:1595.00px;top:875.90px;width:2.00px;height:54.10px;background:#f3f3f3"></div>
<div class="r" style="left:1776.00px;top:875.90px;width:2.00px;height:54.10px;background:#f3f3f3"></div>
<div class="r" style="left:1975.00px;top:875.90px;width:2.00px;height:54.10px;background:#f3f3f3"></div>
<div class="r" style="left:2387.00px;top:875.90px;width:2.00px;height:54.10px;background:#f3f3f3"></div>
<div class="r" style="left:2604.00px;top:875.90px;width:2.00px;height:54.10px;background:#f3f3f3"></div>
<div class="r" style="left:2748.00px;top:875.90px;width:2.00px;height:54.10px;background:#f3f3f3"></div>
<div class="r" style="left:2821.00px;top:875.90px;width:2.00px;height:54.10px;background:#f3f3f3"></div>
<div class="r" style="left:3018.50px;top:875.90px;width:2.00px;height:54.10px;background:#f3f3f3"></div>
<div class="r" style="left:3144.50px;top:875.90px;width:2.00px;height:54.10px;background:#f3f3f3"></div>
<div class="r" style="left:3414.00px;top:875.90px;width:2.00px;height:54.10px;background:#f3f3f3"></div>
<div class="r" style="left:49.00px;top:929.00px;width:3380.00px;height:1.00px;background:#f6f6f6"></div>
<svg class="r" style="left:117px;top:887.9000000000001px;" width="32" height="33" viewBox="0 0 32 33"><path d="M4 8 V30.5 H24.5" fill="none" stroke="#5a5a5a" stroke-width="2.2"/><rect x="7.5" y="2.5" width="21" height="23" fill="none" stroke="#5a5a5a" stroke-width="2.2"/><path d="M11.5 13.5 L16.5 19.5 L26 5.5" fill="none" stroke="#5a5a5a" stroke-width="2.6"/></svg>
<svg class="r" style="left:194.5px;top:889.9000000000001px;" width="28" height="28" viewBox="0 0 28 28"><circle cx="14" cy="14" r="10" fill="#b1263f"/></svg>
<div class="t" style="left:249.00px;top:886.69px;width:285.00px;height:42px;overflow:hidden;font-size:34.8px;color:#000"><span style="position:absolute;top:0;left:2.43px">Fattura incompleta</span></div>
<div class="t" style="left:537.00px;top:886.69px;width:141.50px;height:42px;overflow:hidden;font-size:34.8px;color:#000"><span style="position:absolute;top:0;left:39.82px">75909</span></div>
<div class="t" style="left:681.50px;top:886.69px;width:122.50px;height:42px;overflow:hidden;font-size:34.8px;color:#000"><span style="position:absolute;top:0;left:21.53px">34498</span></div>
<div class="t" style="left:807.00px;top:886.69px;width:356.00px;height:42px;overflow:hidden;font-size:34.8px;color:#000"><span style="position:absolute;top:0;left:1.33px">NANNI OTTAVIO srl</span></div>
<div class="t" style="left:2606.50px;top:886.69px;width:141.00px;height:42px;overflow:hidden;font-size:34.8px;color:#000"><span style="position:absolute;top:0;left:82.06px">113</span></div>
<div class="t" style="left:2750.50px;top:886.69px;width:70.00px;height:42px;overflow:hidden;font-size:34.8px;color:#000"><span style="position:absolute;top:0;left:45.66px">6</span></div>
<svg class="r" style="left:3064px;top:887.9000000000001px;" width="32" height="33" viewBox="0 0 32 33"><path d="M4 8 V30.5 H24.5" fill="none" stroke="#5a5a5a" stroke-width="2.2"/><rect x="7.5" y="2.5" width="21" height="23" fill="none" stroke="#5a5a5a" stroke-width="2.2"/></svg>
<div class="t" style="left:3147.00px;top:886.69px;width:266.50px;height:42px;overflow:hidden;font-size:34.8px;color:#000"><span style="position:absolute;top:0;left:3.41px">AUTO INVIATA</span></div>
<div class="t" style="left:3416.50px;top:886.69px;width:11.00px;height:42px;overflow:hidden;font-size:34.8px;color:#000"><span style="position:absolute;top:0;left:3.41px">AUTO</span></div>
<div class="r" style="left:49.00px;top:930.00px;width:3380.00px;height:54.10px;background:#f3f3f3"></div>
<svg class="r" style="left:117px;top:942.0px;" width="32" height="33" viewBox="0 0 32 33"><path d="M4 8 V30.5 H24.5" fill="none" stroke="#5a5a5a" stroke-width="2.2"/><rect x="7.5" y="2.5" width="21" height="23" fill="none" stroke="#5a5a5a" stroke-width="2.2"/><path d="M11.5 13.5 L16.5 19.5 L26 5.5" fill="none" stroke="#5a5a5a" stroke-width="2.6"/></svg>
<svg class="r" style="left:194.5px;top:944.0px;" width="28" height="28" viewBox="0 0 28 28"><circle cx="14" cy="14" r="10" fill="#b1263f"/></svg>
<div class="t" style="left:249.00px;top:940.74px;width:285.00px;height:42px;overflow:hidden;font-size:34.8px;color:#000"><span style="position:absolute;top:0;left:2.43px">Fattura incompleta</span></div>
<div class="t" style="left:537.00px;top:940.74px;width:141.50px;height:42px;overflow:hidden;font-size:34.8px;color:#000"><span style="position:absolute;top:0;left:39.74px">75918</span></div>
<div class="t" style="left:681.50px;top:940.74px;width:122.50px;height:42px;overflow:hidden;font-size:34.8px;color:#000"><span style="position:absolute;top:0;left:21.80px">34507</span></div>
<div class="t" style="left:807.00px;top:940.74px;width:356.00px;height:42px;overflow:hidden;font-size:34.8px;color:#000"><span style="position:absolute;top:0;left:1.33px">H.P. di Bombardieri Gianni</span></div>
<div class="t" style="left:2606.50px;top:940.74px;width:141.00px;height:42px;overflow:hidden;font-size:34.8px;color:#000"><span style="position:absolute;top:0;left:82.06px">113</span></div>
<div class="t" style="left:2750.50px;top:940.74px;width:70.00px;height:42px;overflow:hidden;font-size:34.8px;color:#000"><span style="position:absolute;top:0;left:45.66px">6</span></div>
<svg class="r" style="left:3064px;top:942.0px;" width="32" height="33" viewBox="0 0 32 33"><path d="M4 8 V30.5 H24.5" fill="none" stroke="#5a5a5a" stroke-width="2.2"/><rect x="7.5" y="2.5" width="21" height="23" fill="none" stroke="#5a5a5a" stroke-width="2.2"/></svg>
<div class="t" style="left:3147.00px;top:940.74px;width:266.50px;height:42px;overflow:hidden;font-size:34.8px;color:#000"><span style="position:absolute;top:0;left:3.41px">AUTO INVIATA</span></div>
<div class="t" style="left:3416.50px;top:940.74px;width:11.00px;height:42px;overflow:hidden;font-size:34.8px;color:#000"><span style="position:absolute;top:0;left:3.41px">AUTO</span></div>
<div class="r" style="left:102.50px;top:984.10px;width:2.00px;height:54.10px;background:#f3f3f3"></div>
<div class="r" style="left:174.50px;top:984.10px;width:2.00px;height:54.10px;background:#f3f3f3"></div>
<div class="r" style="left:246.50px;top:984.10px;width:2.00px;height:54.10px;background:#f3f3f3"></div>
<div class="r" style="left:534.50px;top:984.10px;width:2.00px;height:54.10px;background:#f3f3f3"></div>
<div class="r" style="left:679.00px;top:984.10px;width:2.00px;height:54.10px;background:#f3f3f3"></div>
<div class="r" style="left:804.50px;top:984.10px;width:2.00px;height:54.10px;background:#f3f3f3"></div>
<div class="r" style="left:1163.50px;top:984.10px;width:2.00px;height:54.10px;background:#f3f3f3"></div>
<div class="r" style="left:1398.00px;top:984.10px;width:2.00px;height:54.10px;background:#f3f3f3"></div>
<div class="r" style="left:1595.00px;top:984.10px;width:2.00px;height:54.10px;background:#f3f3f3"></div>
<div class="r" style="left:1776.00px;top:984.10px;width:2.00px;height:54.10px;background:#f3f3f3"></div>
<div class="r" style="left:1975.00px;top:984.10px;width:2.00px;height:54.10px;background:#f3f3f3"></div>
<div class="r" style="left:2387.00px;top:984.10px;width:2.00px;height:54.10px;background:#f3f3f3"></div>
<div class="r" style="left:2604.00px;top:984.10px;width:2.00px;height:54.10px;background:#f3f3f3"></div>
<div class="r" style="left:2748.00px;top:984.10px;width:2.00px;height:54.10px;background:#f3f3f3"></div>
<div class="r" style="left:2821.00px;top:984.10px;width:2.00px;height:54.10px;background:#f3f3f3"></div>
<div class="r" style="left:3018.50px;top:984.10px;width:2.00px;height:54.10px;background:#f3f3f3"></div>
<div class="r" style="left:3144.50px;top:984.10px;width:2.00px;height:54.10px;background:#f3f3f3"></div>
<div class="r" style="left:3414.00px;top:984.10px;width:2.00px;height:54.10px;background:#f3f3f3"></div>
<div class="r" style="left:49.00px;top:1037.20px;width:3380.00px;height:1.00px;background:#f6f6f6"></div>
<svg class="r" style="left:117px;top:996.1px;" width="32" height="33" viewBox="0 0 32 33"><path d="M4 8 V30.5 H24.5" fill="none" stroke="#5a5a5a" stroke-width="2.2"/><rect x="7.5" y="2.5" width="21" height="23" fill="none" stroke="#5a5a5a" stroke-width="2.2"/><path d="M11.5 13.5 L16.5 19.5 L26 5.5" fill="none" stroke="#5a5a5a" stroke-width="2.6"/></svg>
<svg class="r" style="left:194.5px;top:998.1px;" width="28" height="28" viewBox="0 0 28 28"><circle cx="14" cy="14" r="10" fill="#b1263f"/></svg>
<div class="t" style="left:249.00px;top:994.79px;width:285.00px;height:42px;overflow:hidden;font-size:34.8px;color:#000"><span style="position:absolute;top:0;left:2.43px">Fattura incompleta</span></div>
<div class="t" style="left:537.00px;top:994.79px;width:141.50px;height:42px;overflow:hidden;font-size:34.8px;color:#000"><span style="position:absolute;top:0;left:40.00px">75917</span></div>
<div class="t" style="left:681.50px;top:994.79px;width:122.50px;height:42px;overflow:hidden;font-size:34.8px;color:#000"><span style="position:absolute;top:0;left:21.53px">34506</span></div>
<div class="t" style="left:807.00px;top:994.79px;width:356.00px;height:42px;overflow:hidden;font-size:34.8px;color:#000"><span style="position:absolute;top:0;left:1.33px">PARFUMERIE RENOIR</span></div>
<div class="t" style="left:2606.50px;top:994.79px;width:141.00px;height:42px;overflow:hidden;font-size:34.8px;color:#000"><span style="position:absolute;top:0;left:82.06px">113</span></div>
<div class="t" style="left:2750.50px;top:994.79px;width:70.00px;height:42px;overflow:hidden;font-size:34.8px;color:#000"><span style="position:absolute;top:0;left:45.66px">6</span></div>
<svg class="r" style="left:3064px;top:996.1px;" width="32" height="33" viewBox="0 0 32 33"><path d="M4 8 V30.5 H24.5" fill="none" stroke="#5a5a5a" stroke-width="2.2"/><rect x="7.5" y="2.5" width="21" height="23" fill="none" stroke="#5a5a5a" stroke-width="2.2"/></svg>
<div class="t" style="left:3147.00px;top:994.79px;width:266.50px;height:42px;overflow:hidden;font-size:34.8px;color:#000"><span style="position:absolute;top:0;left:3.41px">AUTO INVIATA</span></div>
<div class="t" style="left:3416.50px;top:994.79px;width:11.00px;height:42px;overflow:hidden;font-size:34.8px;color:#000"><span style="position:absolute;top:0;left:3.41px">AUTO</span></div>
<div class="r" style="left:49.00px;top:1038.20px;width:3380.00px;height:54.10px;background:#f3f3f3"></div>
<svg class="r" style="left:117px;top:1050.2px;" width="32" height="33" viewBox="0 0 32 33"><path d="M4 8 V30.5 H24.5" fill="none" stroke="#5a5a5a" stroke-width="2.2"/><rect x="7.5" y="2.5" width="21" height="23" fill="none" stroke="#5a5a5a" stroke-width="2.2"/><path d="M11.5 13.5 L16.5 19.5 L26 5.5" fill="none" stroke="#5a5a5a" stroke-width="2.6"/></svg>
<svg class="r" style="left:194.5px;top:1052.2px;" width="28" height="28" viewBox="0 0 28 28"><circle cx="14" cy="14" r="10" fill="#d98b3f"/></svg>
<div class="t" style="left:249.00px;top:1048.84px;width:285.00px;height:42px;overflow:hidden;font-size:34.8px;color:#000"><span style="position:absolute;top:0;left:5.21px">Anagrafica differenze</span></div>
<div class="t" style="left:537.00px;top:1048.84px;width:141.50px;height:42px;overflow:hidden;font-size:34.8px;color:#000"><span style="position:absolute;top:0;left:39.74px">62888</span></div>
<div class="t" style="left:681.50px;top:1048.84px;width:122.50px;height:42px;overflow:hidden;font-size:34.8px;color:#000"><span style="position:absolute;top:0;left:21.80px">22177</span></div>
<div class="t" style="left:807.00px;top:1048.84px;width:356.00px;height:42px;overflow:hidden;font-size:34.8px;color:#000"><span style="position:absolute;top:0;left:2.46px">Giulio Tirelli</span></div>
<div class="t" style="left:2606.50px;top:1048.84px;width:141.00px;height:42px;overflow:hidden;font-size:34.8px;color:#000"><span style="position:absolute;top:0;left:82.06px">113</span></div>
<div class="t" style="left:2750.50px;top:1048.84px;width:70.00px;height:42px;overflow:hidden;font-size:34.8px;color:#000"><span style="position:absolute;top:0;left:45.66px">6</span></div>
<svg class="r" style="left:3064px;top:1050.2px;" width="32" height="33" viewBox="0 0 32 33"><path d="M4 8 V30.5 H24.5" fill="none" stroke="#5a5a5a" stroke-width="2.2"/><rect x="7.5" y="2.5" width="21" height="23" fill="none" stroke="#5a5a5a" stroke-width="2.2"/></svg>
<div class="t" style="left:3147.00px;top:1048.84px;width:266.50px;height:42px;overflow:hidden;font-size:34.8px;color:#000"><span style="position:absolute;top:0;left:3.41px">AUTO INVIATA</span></div>
<div class="t" style="left:3416.50px;top:1048.84px;width:11.00px;height:42px;overflow:hidden;font-size:34.8px;color:#000"><span style="position:absolute;top:0;left:3.41px">AUTO</span></div>
<div class="r" style="left:102.50px;top:1092.30px;width:2.00px;height:54.10px;background:#f3f3f3"></div>
<div class="r" style="left:174.50px;top:1092.30px;width:2.00px;height:54.10px;background:#f3f3f3"></div>
<div class="r" style="left:246.50px;top:1092.30px;width:2.00px;height:54.10px;background:#f3f3f3"></div>
<div class="r" style="left:534.50px;top:1092.30px;width:2.00px;height:54.10px;background:#f3f3f3"></div>
<div class="r" style="left:679.00px;top:1092.30px;width:2.00px;height:54.10px;background:#f3f3f3"></div>
<div class="r" style="left:804.50px;top:1092.30px;width:2.00px;height:54.10px;background:#f3f3f3"></div>
<div class="r" style="left:1163.50px;top:1092.30px;width:2.00px;height:54.10px;background:#f3f3f3"></div>
<div class="r" style="left:1398.00px;top:1092.30px;width:2.00px;height:54.10px;background:#f3f3f3"></div>
<div class="r" style="left:1595.00px;top:1092.30px;width:2.00px;height:54.10px;background:#f3f3f3"></div>
<div class="r" style="left:1776.00px;top:1092.30px;width:2.00px;height:54.10px;background:#f3f3f3"></div>
<div class="r" style="left:1975.00px;top:1092.30px;width:2.00px;height:54.10px;background:#f3f3f3"></div>
<div class="r" style="left:2387.00px;top:1092.30px;width:2.00px;height:54.10px;background:#f3f3f3"></div>
<div class="r" style="left:2604.00px;top:1092.30px;width:2.00px;height:54.10px;background:#f3f3f3"></div>
<div class="r" style="left:2748.00px;top:1092.30px;width:2.00px;height:54.10px;background:#f3f3f3"></div>
<div class="r" style="left:2821.00px;top:1092.30px;width:2.00px;height:54.10px;background:#f3f3f3"></div>
<div class="r" style="left:3018.50px;top:1092.30px;width:2.00px;height:54.10px;background:#f3f3f3"></div>
<div class="r" style="left:3144.50px;top:1092.30px;width:2.00px;height:54.10px;background:#f3f3f3"></div>
<div class="r" style="left:3414.00px;top:1092.30px;width:2.00px;height:54.10px;background:#f3f3f3"></div>
<div class="r" style="left:49.00px;top:1145.40px;width:3380.00px;height:1.00px;background:#f6f6f6"></div>
<svg class="r" style="left:117px;top:1104.3px;" width="32" height="33" viewBox="0 0 32 33"><path d="M4 8 V30.5 H24.5" fill="none" stroke="#5a5a5a" stroke-width="2.2"/><rect x="7.5" y="2.5" width="21" height="23" fill="none" stroke="#5a5a5a" stroke-width="2.2"/><path d="M11.5 13.5 L16.5 19.5 L26 5.5" fill="none" stroke="#5a5a5a" stroke-width="2.6"/></svg>
<svg class="r" style="left:194.5px;top:1106.3px;" width="28" height="28" viewBox="0 0 28 28"><circle cx="14" cy="14" r="10" fill="#b1263f"/></svg>
<div class="t" style="left:249.00px;top:1102.89px;width:285.00px;height:42px;overflow:hidden;font-size:34.8px;color:#000"><span style="position:absolute;top:0;left:2.43px">Fattura incompleta</span></div>
<div class="t" style="left:537.00px;top:1102.89px;width:141.50px;height:42px;overflow:hidden;font-size:34.8px;color:#000"><span style="position:absolute;top:0;left:39.74px">75916</span></div>
<div class="t" style="left:681.50px;top:1102.89px;width:122.50px;height:42px;overflow:hidden;font-size:34.8px;color:#000"><span style="position:absolute;top:0;left:21.45px">34505</span></div>
<div class="t" style="left:807.00px;top:1102.89px;width:356.00px;height:42px;overflow:hidden;font-size:34.8px;color:#000"><span style="position:absolute;top:0;left:4.11px">Alberto Negrini</span></div>
<div class="t" style="left:2606.50px;top:1102.89px;width:141.00px;height:42px;overflow:hidden;font-size:34.8px;color:#000"><span style="position:absolute;top:0;left:82.06px">113</span></div>
<div class="t" style="left:2750.50px;top:1102.89px;width:70.00px;height:42px;overflow:hidden;font-size:34.8px;color:#000"><span style="position:absolute;top:0;left:45.66px">6</span></div>
<svg class="r" style="left:3064px;top:1104.3px;" width="32" height="33" viewBox="0 0 32 33"><path d="M4 8 V30.5 H24.5" fill="none" stroke="#5a5a5a" stroke-width="2.2"/><rect x="7.5" y="2.5" width="21" height="23" fill="none" stroke="#5a5a5a" stroke-width="2.2"/></svg>
<div class="t" style="left:3147.00px;top:1102.89px;width:266.50px;height:42px;overflow:hidden;font-size:34.8px;color:#000"><span style="position:absolute;top:0;left:3.41px">AUTO INVIATA</span></div>
<div class="t" style="left:3416.50px;top:1102.89px;width:11.00px;height:42px;overflow:hidden;font-size:34.8px;color:#000"><span style="position:absolute;top:0;left:3.41px">AUTO</span></div>
<div class="r" style="left:49.00px;top:1146.40px;width:3380.00px;height:54.10px;background:#f3f3f3"></div>
<svg class="r" style="left:117px;top:1158.4px;" width="32" height="33" viewBox="0 0 32 33"><path d="M4 8 V30.5 H24.5" fill="none" stroke="#5a5a5a" stroke-width="2.2"/><rect x="7.5" y="2.5" width="21" height="23" fill="none" stroke="#5a5a5a" stroke-width="2.2"/><path d="M11.5 13.5 L16.5 19.5 L26 5.5" fill="none" stroke="#5a5a5a" stroke-width="2.6"/></svg>
<svg class="r" style="left:194.5px;top:1160.4px;" width="28" height="28" viewBox="0 0 28 28"><circle cx="14" cy="14" r="10" fill="#b1263f"/></svg>
<div class="t" style="left:249.00px;top:1156.94px;width:285.00px;height:42px;overflow:hidden;font-size:34.8px;color:#000"><span style="position:absolute;top:0;left:2.43px">Fattura incompleta</span></div>
<div class="t" style="left:537.00px;top:1156.94px;width:141.50px;height:42px;overflow:hidden;font-size:34.8px;color:#000"><span style="position:absolute;top:0;left:39.65px">75915</span></div>
<div class="t" style="left:681.50px;top:1156.94px;width:122.50px;height:42px;overflow:hidden;font-size:34.8px;color:#000"><span style="position:absolute;top:0;left:21.01px">34504</span></div>
<div class="t" style="left:807.00px;top:1156.94px;width:356.00px;height:42px;overflow:hidden;font-size:34.8px;color:#000"><span style="position:absolute;top:0;left:1.33px">Epicura Srl</span></div>
<div class="t" style="left:2606.50px;top:1156.94px;width:141.00px;height:42px;overflow:hidden;font-size:34.8px;color:#000"><span style="position:absolute;top:0;left:82.06px">113</span></div>
<div class="t" style="left:2750.50px;top:1156.94px;width:70.00px;height:42px;overflow:hidden;font-size:34.8px;color:#000"><span style="position:absolute;top:0;left:45.66px">6</span></div>
<svg class="r" style="left:3064px;top:1158.4px;" width="32" height="33" viewBox="0 0 32 33"><path d="M4 8 V30.5 H24.5" fill="none" stroke="#5a5a5a" stroke-width="2.2"/><rect x="7.5" y="2.5" width="21" height="23" fill="none" stroke="#5a5a5a" stroke-width="2.2"/></svg>
<div class="t" style="left:3147.00px;top:1156.94px;width:266.50px;height:42px;overflow:hidden;font-size:34.8px;color:#000"><span style="position:absolute;top:0;left:3.41px">AUTO INVIATA</span></div>
<div class="t" style="left:3416.50px;top:1156.94px;width:11.00px;height:42px;overflow:hidden;font-size:34.8px;color:#000"><span style="position:absolute;top:0;left:3.41px">AUTO</span></div>
<div class="r" style="left:102.50px;top:1200.50px;width:2.00px;height:54.10px;background:#f3f3f3"></div>
<div class="r" style="left:174.50px;top:1200.50px;width:2.00px;height:54.10px;background:#f3f3f3"></div>
<div class="r" style="left:246.50px;top:1200.50px;width:2.00px;height:54.10px;background:#f3f3f3"></div>
<div class="r" style="left:534.50px;top:1200.50px;width:2.00px;height:54.10px;background:#f3f3f3"></div>
<div class="r" style="left:679.00px;top:1200.50px;width:2.00px;height:54.10px;background:#f3f3f3"></div>
<div class="r" style="left:804.50px;top:1200.50px;width:2.00px;height:54.10px;background:#f3f3f3"></div>
<div class="r" style="left:1163.50px;top:1200.50px;width:2.00px;height:54.10px;background:#f3f3f3"></div>
<div class="r" style="left:1398.00px;top:1200.50px;width:2.00px;height:54.10px;background:#f3f3f3"></div>
<div class="r" style="left:1595.00px;top:1200.50px;width:2.00px;height:54.10px;background:#f3f3f3"></div>
<div class="r" style="left:1776.00px;top:1200.50px;width:2.00px;height:54.10px;background:#f3f3f3"></div>
<div class="r" style="left:1975.00px;top:1200.50px;width:2.00px;height:54.10px;background:#f3f3f3"></div>
<div class="r" style="left:2387.00px;top:1200.50px;width:2.00px;height:54.10px;background:#f3f3f3"></div>
<div class="r" style="left:2604.00px;top:1200.50px;width:2.00px;height:54.10px;background:#f3f3f3"></div>
<div class="r" style="left:2748.00px;top:1200.50px;width:2.00px;height:54.10px;background:#f3f3f3"></div>
<div class="r" style="left:2821.00px;top:1200.50px;width:2.00px;height:54.10px;background:#f3f3f3"></div>
<div class="r" style="left:3018.50px;top:1200.50px;width:2.00px;height:54.10px;background:#f3f3f3"></div>
<div class="r" style="left:3144.50px;top:1200.50px;width:2.00px;height:54.10px;background:#f3f3f3"></div>
<div class="r" style="left:3414.00px;top:1200.50px;width:2.00px;height:54.10px;background:#f3f3f3"></div>
<div class="r" style="left:49.00px;top:1253.60px;width:3380.00px;height:1.00px;background:#f6f6f6"></div>
<svg class="r" style="left:117px;top:1212.5px;" width="32" height="33" viewBox="0 0 32 33"><path d="M4 8 V30.5 H24.5" fill="none" stroke="#5a5a5a" stroke-width="2.2"/><rect x="7.5" y="2.5" width="21" height="23" fill="none" stroke="#5a5a5a" stroke-width="2.2"/><path d="M11.5 13.5 L16.5 19.5 L26 5.5" fill="none" stroke="#5a5a5a" stroke-width="2.6"/></svg>
<svg class="r" style="left:194.5px;top:1214.5px;" width="28" height="28" viewBox="0 0 28 28"><circle cx="14" cy="14" r="10" fill="#b1263f"/></svg>
<div class="t" style="left:249.00px;top:1210.99px;width:285.00px;height:42px;overflow:hidden;font-size:34.8px;color:#000"><span style="position:absolute;top:0;left:2.43px">Fattura incompleta</span></div>
<div class="t" style="left:537.00px;top:1210.99px;width:141.50px;height:42px;overflow:hidden;font-size:34.8px;color:#000"><span style="position:absolute;top:0;left:39.21px">75914</span></div>
<div class="t" style="left:681.50px;top:1210.99px;width:122.50px;height:42px;overflow:hidden;font-size:34.8px;color:#000"><span style="position:absolute;top:0;left:21.53px">34503</span></div>
<div class="t" style="left:807.00px;top:1210.99px;width:356.00px;height:42px;overflow:hidden;font-size:34.8px;color:#000"><span style="position:absolute;top:0;left:2.46px">CAVERNI RICCARDO</span></div>
<div class="t" style="left:2606.50px;top:1210.99px;width:141.00px;height:42px;overflow:hidden;font-size:34.8px;color:#000"><span style="position:absolute;top:0;left:82.06px">113</span></div>
<div class="t" style="left:2750.50px;top:1210.99px;width:70.00px;height:42px;overflow:hidden;font-size:34.8px;color:#000"><span style="position:absolute;top:0;left:45.66px">6</span></div>
<svg class="r" style="left:3064px;top:1212.5px;" width="32" height="33" viewBox="0 0 32 33"><path d="M4 8 V30.5 H24.5" fill="none" stroke="#5a5a5a" stroke-width="2.2"/><rect x="7.5" y="2.5" width="21" height="23" fill="none" stroke="#5a5a5a" stroke-width="2.2"/></svg>
<div class="t" style="left:3147.00px;top:1210.99px;width:266.50px;height:42px;overflow:hidden;font-size:34.8px;color:#000"><span style="position:absolute;top:0;left:3.41px">AUTO INVIATA</span></div>
<div class="t" style="left:3416.50px;top:1210.99px;width:11.00px;height:42px;overflow:hidden;font-size:34.8px;color:#000"><span style="position:absolute;top:0;left:3.41px">AUTO</span></div>
<div class="r" style="left:49.00px;top:1254.60px;width:3380.00px;height:54.10px;background:#f3f3f3"></div>
<svg class="r" style="left:117px;top:1266.6px;" width="32" height="33" viewBox="0 0 32 33"><path d="M4 8 V30.5 H24.5" fill="none" stroke="#5a5a5a" stroke-width="2.2"/><rect x="7.5" y="2.5" width="21" height="23" fill="none" stroke="#5a5a5a" stroke-width="2.2"/><path d="M11.5 13.5 L16.5 19.5 L26 5.5" fill="none" stroke="#5a5a5a" stroke-width="2.6"/></svg>
<svg class="r" style="left:194.5px;top:1268.6px;" width="28" height="28" viewBox="0 0 28 28"><circle cx="14" cy="14" r="10" fill="#b1263f"/></svg>
<div class="t" style="left:249.00px;top:1265.04px;width:285.00px;height:42px;overflow:hidden;font-size:34.8px;color:#000"><span style="position:absolute;top:0;left:2.43px">Fattura incompleta</span></div>
<div class="t" style="left:537.00px;top:1265.04px;width:141.50px;height:42px;overflow:hidden;font-size:34.8px;color:#000"><span style="position:absolute;top:0;left:39.74px">75913</span></div>
<div class="t" style="left:681.50px;top:1265.04px;width:122.50px;height:42px;overflow:hidden;font-size:34.8px;color:#000"><span style="position:absolute;top:0;left:21.80px">34502</span></div>
<div class="t" style="left:807.00px;top:1265.04px;width:356.00px;height:42px;overflow:hidden;font-size:34.8px;color:#000"><span style="position:absolute;top:0;left:4.11px">Aquagon srl</span></div>
<div class="t" style="left:1166.00px;top:1265.04px;width:231.50px;height:42px;overflow:hidden;font-size:34.8px;color:#000"><span style="position:absolute;top:0;left:5.39px">15145131007</span></div>
<div class="t" style="left:1400.50px;top:1265.04px;width:194.00px;height:42px;overflow:hidden;font-size:34.8px;color:#000"><span style="position:absolute;top:0;left:11.20px">11/10/2021</span></div>
<div class="t" style="left:1597.50px;top:1265.04px;width:178.00px;height:42px;overflow:hidden;font-size:34.8px;color:#000"><span style="position:absolute;top:0;left:3.20px">11/10/2021</span></div>
<div class="t" style="left:1778.50px;top:1265.04px;width:196.00px;height:42px;overflow:hidden;font-size:34.8px;color:#000"><span style="position:absolute;top:0;left:12.20px">11/10/2021</span></div>
<div class="t" style="left:1977.50px;top:1265.04px;width:409.00px;height:42px;overflow:hidden;font-size:34.8px;color:#000"><span style="position:absolute;top:0;left:1.08px">IT21-68211I-15499</span></div>
<div class="t" style="left:2389.50px;top:1265.04px;width:214.00px;height:42px;overflow:hidden;font-size:34.8px;color:#000"><span style="position:absolute;top:0;left:123.69px">19,96</span></div>
<div class="t" style="left:2606.50px;top:1265.04px;width:141.00px;height:42px;overflow:hidden;font-size:34.8px;color:#000"><span style="position:absolute;top:0;left:82.06px">113</span></div>
<div class="t" style="left:2750.50px;top:1265.04px;width:70.00px;height:42px;overflow:hidden;font-size:34.8px;color:#000"><span style="position:absolute;top:0;left:45.66px">6</span></div>
<svg class="r" style="left:3064px;top:1266.6px;" width="32" height="33" viewBox="0 0 32 33"><path d="M4 8 V30.5 H24.5" fill="none" stroke="#5a5a5a" stroke-width="2.2"/><rect x="7.5" y="2.5" width="21" height="23" fill="none" stroke="#5a5a5a" stroke-width="2.2"/></svg>
<div class="t" style="left:3147.00px;top:1265.04px;width:266.50px;height:42px;overflow:hidden;font-size:34.8px;color:#000"><span style="position:absolute;top:0;left:3.41px">AUTO INVIATA</span></div>
<div class="t" style="left:3416.50px;top:1265.04px;width:11.00px;height:42px;overflow:hidden;font-size:34.8px;color:#000"><span style="position:absolute;top:0;left:3.41px">AUTO</span></div>
<div class="r" style="left:102.50px;top:1308.70px;width:2.00px;height:54.10px;background:#f3f3f3"></div>
<div class="r" style="left:174.50px;top:1308.70px;width:2.00px;height:54.10px;background:#f3f3f3"></div>
<div class="r" style="left:246.50px;top:1308.70px;width:2.00px;height:54.10px;background:#f3f3f3"></div>
<div class="r" style="left:534.50px;top:1308.70px;width:2.00px;height:54.10px;background:#f3f3f3"></div>
<div class="r" style="left:679.00px;top:1308.70px;width:2.00px;height:54.10px;background:#f3f3f3"></div>
<div class="r" style="left:804.50px;top:1308.70px;width:2.00px;height:54.10px;background:#f3f3f3"></div>
<div class="r" style="left:1163.50px;top:1308.70px;width:2.00px;height:54.10px;background:#f3f3f3"></div>
<div class="r" style="left:1398.00px;top:1308.70px;width:2.00px;height:54.10px;background:#f3f3f3"></div>
<div class="r" style="left:1595.00px;top:1308.70px;width:2.00px;height:54.10px;background:#f3f3f3"></div>
<div class="r" style="left:1776.00px;top:1308.70px;width:2.00px;height:54.10px;background:#f3f3f3"></div>
<div class="r" style="left:1975.00px;top:1308.70px;width:2.00px;height:54.10px;background:#f3f3f3"></div>
<div class="r" style="left:2387.00px;top:1308.70px;width:2.00px;height:54.10px;background:#f3f3f3"></div>
<div class="r" style="left:2604.00px;top:1308.70px;width:2.00px;height:54.10px;background:#f3f3f3"></div>
<div class="r" style="left:2748.00px;top:1308.70px;width:2.00px;height:54.10px;background:#f3f3f3"></div>
<div class="r" style="left:2821.00px;top:1308.70px;width:2.00px;height:54.10px;background:#f3f3f3"></div>
<div class="r" style="left:3018.50px;top:1308.70px;width:2.00px;height:54.10px;background:#f3f3f3"></div>
<div class="r" style="left:3144.50px;top:1308.70px;width:2.00px;height:54.10px;background:#f3f3f3"></div>
<div class="r" style="left:3414.00px;top:1308.70px;width:2.00px;height:54.10px;background:#f3f3f3"></div>
<div class="r" style="left:49.00px;top:1361.80px;width:3380.00px;height:1.00px;background:#f6f6f6"></div>
<svg class="r" style="left:117px;top:1320.7px;" width="32" height="33" viewBox="0 0 32 33"><path d="M4 8 V30.5 H24.5" fill="none" stroke="#5a5a5a" stroke-width="2.2"/><rect x="7.5" y="2.5" width="21" height="23" fill="none" stroke="#5a5a5a" stroke-width="2.2"/><path d="M11.5 13.5 L16.5 19.5 L26 5.5" fill="none" stroke="#5a5a5a" stroke-width="2.6"/></svg>
<svg class="r" style="left:194.5px;top:1322.7px;" width="28" height="28" viewBox="0 0 28 28"><circle cx="14" cy="14" r="10" fill="#b1263f"/></svg>
<div class="t" style="left:249.00px;top:1319.09px;width:285.00px;height:42px;overflow:hidden;font-size:34.8px;color:#000"><span style="position:absolute;top:0;left:2.43px">Fattura incompleta</span></div>
<div class="t" style="left:537.00px;top:1319.09px;width:141.50px;height:42px;overflow:hidden;font-size:34.8px;color:#000"><span style="position:absolute;top:0;left:42.52px">75911</span></div>
<div class="t" style="left:681.50px;top:1319.09px;width:122.50px;height:42px;overflow:hidden;font-size:34.8px;color:#000"><span style="position:absolute;top:0;left:21.36px">34500</span></div>
<div class="t" style="left:807.00px;top:1319.09px;width:356.00px;height:42px;overflow:hidden;font-size:34.8px;color:#000"><span style="position:absolute;top:0;left:1.33px">Dr. Vittorio Bisogni</span></div>
<div class="t" style="left:1166.00px;top:1319.09px;width:231.50px;height:42px;overflow:hidden;font-size:34.8px;color:#000"><span style="position:absolute;top:0;left:6.61px">02455990792</span></div>
<div class="t" style="left:1400.50px;top:1319.09px;width:194.00px;height:42px;overflow:hidden;font-size:34.8px;color:#000"><span style="position:absolute;top:0;left:11.20px">11/10/2021</span></div>
<div class="t" style="left:1597.50px;top:1319.09px;width:178.00px;height:42px;overflow:hidden;font-size:34.8px;color:#000"><span style="position:absolute;top:0;left:3.20px">11/10/2021</span></div>
<div class="t" style="left:1778.50px;top:1319.09px;width:196.00px;height:42px;overflow:hidden;font-size:34.8px;color:#000"><span style="position:absolute;top:0;left:12.20px">11/10/2021</span></div>
<div class="t" style="left:1977.50px;top:1319.09px;width:409.00px;height:42px;overflow:hidden;font-size:34.8px;color:#000"><span style="position:absolute;top:0;left:1.08px">IT21-68211I-15500</span></div>
<div class="t" style="left:2389.50px;top:1319.09px;width:214.00px;height:42px;overflow:hidden;font-size:34.8px;color:#000"><span style="position:absolute;top:0;left:143.09px">4,88</span></div>
<div class="t" style="left:2606.50px;top:1319.09px;width:141.00px;height:42px;overflow:hidden;font-size:34.8px;color:#000"><span style="position:absolute;top:0;left:82.06px">113</span></div>
<div class="t" style="left:2750.50px;top:1319.09px;width:70.00px;height:42px;overflow:hidden;font-size:34.8px;color:#000"><span style="position:absolute;top:0;left:45.66px">6</span></div>
<svg class="r" style="left:3064px;top:1320.7px;" width="32" height="33" viewBox="0 0 32 33"><path d="M4 8 V30.5 H24.5" fill="none" stroke="#5a5a5a" stroke-width="2.2"/><rect x="7.5" y="2.5" width="21" height="23" fill="none" stroke="#5a5a5a" stroke-width="2.2"/></svg>
<div class="t" style="left:3147.00px;top:1319.09px;width:266.50px;height:42px;overflow:hidden;font-size:34.8px;color:#000"><span style="position:absolute;top:0;left:3.41px">AUTO INVIATA</span></div>
<div class="t" style="left:3416.50px;top:1319.09px;width:11.00px;height:42px;overflow:hidden;font-size:34.8px;color:#000"><span style="position:absolute;top:0;left:3.41px">AUTO</span></div>
<div class="r" style="left:49.00px;top:1362.80px;width:3380.00px;height:54.10px;background:#f3f3f3"></div>
<svg class="r" style="left:117px;top:1374.8000000000002px;" width="32" height="33" viewBox="0 0 32 33"><path d="M4 8 V30.5 H24.5" fill="none" stroke="#5a5a5a" stroke-width="2.2"/><rect x="7.5" y="2.5" width="21" height="23" fill="none" stroke="#5a5a5a" stroke-width="2.2"/><path d="M11.5 13.5 L16.5 19.5 L26 5.5" fill="none" stroke="#5a5a5a" stroke-width="2.6"/></svg>
<svg class="r" style="left:194.5px;top:1376.8000000000002px;" width="28" height="28" viewBox="0 0 28 28"><circle cx="14" cy="14" r="10" fill="#b1263f"/></svg>
<div class="t" style="left:249.00px;top:1373.14px;width:285.00px;height:42px;overflow:hidden;font-size:34.8px;color:#000"><span style="position:absolute;top:0;left:2.43px">Fattura incompleta</span></div>
<div class="t" style="left:537.00px;top:1373.14px;width:141.50px;height:42px;overflow:hidden;font-size:34.8px;color:#000"><span style="position:absolute;top:0;left:39.56px">75910</span></div>
<div class="t" style="left:681.50px;top:1373.14px;width:122.50px;height:42px;overflow:hidden;font-size:34.8px;color:#000"><span style="position:absolute;top:0;left:21.62px">34499</span></div>
<div class="t" style="left:807.00px;top:1373.14px;width:356.00px;height:42px;overflow:hidden;font-size:34.8px;color:#000"><span style="position:absolute;top:0;left:2.63px">STUDIO SAVIC DI SAVIC</span></div>
<div class="t" style="left:1166.00px;top:1373.14px;width:231.50px;height:42px;overflow:hidden;font-size:34.8px;color:#000"><span style="position:absolute;top:0;left:6.61px">04222050249</span></div>
<div class="t" style="left:1400.50px;top:1373.14px;width:194.00px;height:42px;overflow:hidden;font-size:34.8px;color:#000"><span style="position:absolute;top:0;left:11.20px">11/10/2021</span></div>
<div class="t" style="left:1597.50px;top:1373.14px;width:178.00px;height:42px;overflow:hidden;font-size:34.8px;color:#000"><span style="position:absolute;top:0;left:3.20px">11/10/2021</span></div>
<div class="t" style="left:1778.50px;top:1373.14px;width:196.00px;height:42px;overflow:hidden;font-size:34.8px;color:#000"><span style="position:absolute;top:0;left:12.20px">11/10/2021</span></div>
<div class="t" style="left:1977.50px;top:1373.14px;width:409.00px;height:42px;overflow:hidden;font-size:34.8px;color:#000"><span style="position:absolute;top:0;left:1.08px">IT21-68211I-15501</span></div>
<div class="t" style="left:2389.50px;top:1373.14px;width:214.00px;height:42px;overflow:hidden;font-size:34.8px;color:#000"><span style="position:absolute;top:0;left:143.35px">7,87</span></div>
<div class="t" style="left:2606.50px;top:1373.14px;width:141.00px;height:42px;overflow:hidden;font-size:34.8px;color:#000"><span style="position:absolute;top:0;left:82.06px">113</span></div>
<div class="t" style="left:2750.50px;top:1373.14px;width:70.00px;height:42px;overflow:hidden;font-size:34.8px;color:#000"><span style="position:absolute;top:0;left:45.66px">6</span></div>
<svg class="r" style="left:3064px;top:1374.8000000000002px;" width="32" height="33" viewBox="0 0 32 33"><path d="M4 8 V30.5 H24.5" fill="none" stroke="#5a5a5a" stroke-width="2.2"/><rect x="7.5" y="2.5" width="21" height="23" fill="none" stroke="#5a5a5a" stroke-width="2.2"/></svg>
<div class="t" style="left:3147.00px;top:1373.14px;width:266.50px;height:42px;overflow:hidden;font-size:34.8px;color:#000"><span style="position:absolute;top:0;left:3.41px">AUTO INVIATA</span></div>
<div class="t" style="left:3416.50px;top:1373.14px;width:11.00px;height:42px;overflow:hidden;font-size:34.8px;color:#000"><span style="position:absolute;top:0;left:3.41px">AUTO</span></div>
<div class="r" style="left:102.50px;top:1416.90px;width:2.00px;height:54.10px;background:#f3f3f3"></div>
<div class="r" style="left:174.50px;top:1416.90px;width:2.00px;height:54.10px;background:#f3f3f3"></div>
<div class="r" style="left:246.50px;top:1416.90px;width:2.00px;height:54.10px;background:#f3f3f3"></div>
<div class="r" style="left:534.50px;top:1416.90px;width:2.00px;height:54.10px;background:#f3f3f3"></div>
<div class="r" style="left:679.00px;top:1416.90px;width:2.00px;height:54.10px;background:#f3f3f3"></div>
<div class="r" style="left:804.50px;top:1416.90px;width:2.00px;height:54.10px;background:#f3f3f3"></div>
<div class="r" style="left:1163.50px;top:1416.90px;width:2.00px;height:54.10px;background:#f3f3f3"></div>
<div class="r" style="left:1398.00px;top:1416.90px;width:2.00px;height:54.10px;background:#f3f3f3"></div>
<div class="r" style="left:1595.00px;top:1416.90px;width:2.00px;height:54.10px;background:#f3f3f3"></div>
<div class="r" style="left:1776.00px;top:1416.90px;width:2.00px;height:54.10px;background:#f3f3f3"></div>
<div class="r" style="left:1975.00px;top:1416.90px;width:2.00px;height:54.10px;background:#f3f3f3"></div>
<div class="r" style="left:2387.00px;top:1416.90px;width:2.00px;height:54.10px;background:#f3f3f3"></div>
<div class="r" style="left:2604.00px;top:1416.90px;width:2.00px;height:54.10px;background:#f3f3f3"></div>
<div class="r" style="left:2748.00px;top:1416.90px;width:2.00px;height:54.10px;background:#f3f3f3"></div>
<div class="r" style="left:2821.00px;top:1416.90px;width:2.00px;height:54.10px;background:#f3f3f3"></div>
<div class="r" style="left:3018.50px;top:1416.90px;width:2.00px;height:54.10px;background:#f3f3f3"></div>
<div class="r" style="left:3144.50px;top:1416.90px;width:2.00px;height:54.10px;background:#f3f3f3"></div>
<div class="r" style="left:3414.00px;top:1416.90px;width:2.00px;height:54.10px;background:#f3f3f3"></div>
<div class="r" style="left:49.00px;top:1470.00px;width:3380.00px;height:1.00px;background:#f6f6f6"></div>
<svg class="r" style="left:117px;top:1428.9px;" width="32" height="33" viewBox="0 0 32 33"><path d="M4 8 V30.5 H24.5" fill="none" stroke="#5a5a5a" stroke-width="2.2"/><rect x="7.5" y="2.5" width="21" height="23" fill="none" stroke="#5a5a5a" stroke-width="2.2"/><path d="M11.5 13.5 L16.5 19.5 L26 5.5" fill="none" stroke="#5a5a5a" stroke-width="2.6"/></svg>
<svg class="r" style="left:194.5px;top:1430.9px;" width="28" height="28" viewBox="0 0 28 28"><circle cx="14" cy="14" r="10" fill="#b1263f"/></svg>
<div class="t" style="left:249.00px;top:1427.19px;width:285.00px;height:42px;overflow:hidden;font-size:34.8px;color:#000"><span style="position:absolute;top:0;left:2.43px">Fattura incompleta</span></div>
<div class="t" style="left:537.00px;top:1427.19px;width:141.50px;height:42px;overflow:hidden;font-size:34.8px;color:#000"><span style="position:absolute;top:0;left:40.00px">75907</span></div>
<div class="t" style="left:681.50px;top:1427.19px;width:122.50px;height:42px;overflow:hidden;font-size:34.8px;color:#000"><span style="position:absolute;top:0;left:21.53px">34496</span></div>
<div class="t" style="left:807.00px;top:1427.19px;width:356.00px;height:42px;overflow:hidden;font-size:34.8px;color:#000"><span style="position:absolute;top:0;left:2.55px">Officina Balletti di Balletti</span></div>
<div class="t" style="left:1166.00px;top:1427.19px;width:231.50px;height:42px;overflow:hidden;font-size:34.8px;color:#000"><span style="position:absolute;top:0;left:6.61px">00851780429</span></div>
<div class="t" style="left:1400.50px;top:1427.19px;width:194.00px;height:42px;overflow:hidden;font-size:34.8px;color:#000"><span style="position:absolute;top:0;left:11.20px">11/10/2021</span></div>
<div class="t" style="left:1597.50px;top:1427.19px;width:178.00px;height:42px;overflow:hidden;font-size:34.8px;color:#000"><span style="position:absolute;top:0;left:3.20px">11/10/2021</span></div>
<div class="t" style="left:1778.50px;top:1427.19px;width:196.00px;height:42px;overflow:hidden;font-size:34.8px;color:#000"><span style="position:absolute;top:0;left:12.20px">11/10/2021</span></div>
<div class="t" style="left:1977.50px;top:1427.19px;width:409.00px;height:42px;overflow:hidden;font-size:34.8px;color:#000"><span style="position:absolute;top:0;left:1.08px">IT21-68211I-15502</span></div>
<div class="t" style="left:2389.50px;top:1427.19px;width:214.00px;height:42px;overflow:hidden;font-size:34.8px;color:#000"><span style="position:absolute;top:0;left:126.56px">11,92</span></div>
<div class="t" style="left:2606.50px;top:1427.19px;width:141.00px;height:42px;overflow:hidden;font-size:34.8px;color:#000"><span style="position:absolute;top:0;left:82.06px">113</span></div>
<div class="t" style="left:2750.50px;top:1427.19px;width:70.00px;height:42px;overflow:hidden;font-size:34.8px;color:#000"><span style="position:absolute;top:0;left:45.66px">6</span></div>
<svg class="r" style="left:3064px;top:1428.9px;" width="32" height="33" viewBox="0 0 32 33"><path d="M4 8 V30.5 H24.5" fill="none" stroke="#5a5a5a" stroke-width="2.2"/><rect x="7.5" y="2.5" width="21" height="23" fill="none" stroke="#5a5a5a" stroke-width="2.2"/></svg>
<div class="t" style="left:3147.00px;top:1427.19px;width:266.50px;height:42px;overflow:hidden;font-size:34.8px;color:#000"><span style="position:absolute;top:0;left:3.41px">AUTO INVIATA</span></div>
<div class="t" style="left:3416.50px;top:1427.19px;width:11.00px;height:42px;overflow:hidden;font-size:34.8px;color:#000"><span style="position:absolute;top:0;left:3.41px">AUTO</span></div>
<div class="r" style="left:3427.50px;top:660.50px;width:34.50px;height:896.50px;background:#f4f4f4;border-left:1px solid #e6e6e6;box-sizing:border-box"></div>
<div class="r" style="left:3429.00px;top:660.50px;width:32.00px;height:224.50px;background:#f0f0f0;border:1px solid #e6e6e6;border-radius:5px 5px 2px 2px;box-sizing:border-box"></div>
<div class="r" style="left:3429.00px;top:885.00px;width:32.00px;height:223.00px;background:#f0f0f0;border:1px solid #e6e6e6;border-radius:5px 5px 2px 2px;box-sizing:border-box"></div>
<div class="r" style="left:3429.00px;top:1108.00px;width:32.00px;height:225.00px;background:#f0f0f0;border:1px solid #e6e6e6;border-radius:5px 5px 2px 2px;box-sizing:border-box"></div>
<div class="r" style="left:3429.00px;top:1333.00px;width:32.00px;height:225.50px;background:#f0f0f0;border:1px solid #e6e6e6;border-radius:5px 5px 2px 2px;box-sizing:border-box"></div>
<svg class="r" style="left:3436px;top:767px;" width="16" height="11" viewBox="0 0 16 11"><path d="M1 10 L8 2 L15 10 Z" fill="#9a9a9a"/></svg>
<svg class="r" style="left:3436px;top:985px;" width="16" height="22" viewBox="0 0 16 22"><path d="M1 10 L8 2 L15 10 Z M1 20 L8 12 L15 20 Z" fill="#9a9a9a"/></svg>
<svg class="r" style="left:3436px;top:1212px;" width="16" height="22" viewBox="0 0 16 22"><path d="M1 2 L8 10 L15 2 Z M1 12 L8 20 L15 12 Z" fill="#9a9a9a"/></svg>
<svg class="r" style="left:3437px;top:1443px;" width="16" height="11" viewBox="0 0 16 11"><path d="M1 1 L8 9 L15 1 Z" fill="#9a9a9a"/></svg>
<div class="r" style="left:49.00px;top:1531.00px;width:3376.00px;height:27.50px;background:#eeeeee"></div>
<svg class="r" style="left:59px;top:1537px;" width="11" height="16" viewBox="0 0 11 16"><path d="M10 1 L2 8 L10 15 Z" fill="#777"/></svg>
<div class="r" style="left:79.00px;top:1535.70px;width:662.70px;height:19.10px;background:#c9c9c9;border:1px solid #b9b9b9;box-sizing:border-box"></div>
<svg class="r" style="left:3405px;top:1537px;" width="11" height="16" viewBox="0 0 11 16"><path d="M1 1 L9 8 L1 15 Z" fill="#777"/></svg>
<div class="r" style="left:3487.00px;top:661.00px;width:260.20px;height:105.50px;background:#68a5f6;border:1px solid rgba(255,255,255,0.85);box-sizing:border-box;border-radius:3px;box-shadow:0 2px 1.5px rgba(0,0,0,0.45),-1px 0 3px rgba(0,0,0,0.12)"></div>
<div class="t" style="left:3514.46px;top:673.38px;font-size:37.3px;color:#fff;">Deseleziona</div>
<div class="t" style="left:3580.81px;top:716.38px;font-size:37.3px;color:#fff;">tutto</div>
<div class="r" style="left:3487.00px;top:771.00px;width:260.20px;height:105.50px;background:#68a5f6;border:1px solid rgba(255,255,255,0.85);box-sizing:border-box;border-radius:3px;box-shadow:0 2px 1.5px rgba(0,0,0,0.45),-1px 0 3px rgba(0,0,0,0.12)"></div>
<div class="t" style="left:3543.49px;top:783.38px;font-size:37.3px;color:#fff;">Dettaglio</div>
<div class="t" style="left:3564.23px;top:826.38px;font-size:37.3px;color:#fff;">fattura</div>
<div class="r" style="left:3487.00px;top:881.50px;width:260.20px;height:105.50px;background:#68a5f6;border:1px solid rgba(255,255,255,0.85);box-sizing:border-box;border-radius:3px;box-shadow:0 2px 1.5px rgba(0,0,0,0.45),-1px 0 3px rgba(0,0,0,0.12)"></div>
<div class="t" style="left:3535.19px;top:893.88px;font-size:37.3px;color:#fff;">Stati della</div>
<div class="t" style="left:3564.23px;top:936.88px;font-size:37.3px;color:#fff;">fattura</div>
<div class="r" style="left:3487.00px;top:991.50px;width:260.20px;height:105.50px;background:#68a5f6;border:1px solid rgba(255,255,255,0.85);box-sizing:border-box;border-radius:3px;box-shadow:0 2px 1.5px rgba(0,0,0,0.45),-1px 0 3px rgba(0,0,0,0.12)"></div>
<div class="t" style="left:3530.36px;top:1003.88px;font-size:37.3px;color:#fff;">Variazione</div>
<div class="t" style="left:3528.98px;top:1046.88px;font-size:37.3px;color:#fff;">prima nota</div>
<div class="r" style="left:3487.00px;top:1101.00px;width:260.20px;height:105.50px;background:#68a5f6;border:1px solid rgba(255,255,255,0.85);box-sizing:border-box;border-radius:3px;box-shadow:0 2px 1.5px rgba(0,0,0,0.45),-1px 0 3px rgba(0,0,0,0.12)"></div>
<div class="t" style="left:3573.56px;top:1113.38px;font-size:37.3px;color:#fff;">Inizio</div>
<div class="t" style="left:3532.10px;top:1156.38px;font-size:37.3px;color:#fff;">Anteprima</div>
<div class="r" style="left:3487.00px;top:1211.00px;width:260.20px;height:105.50px;background:#68a5f6;border:1px solid rgba(255,255,255,0.85);box-sizing:border-box;border-radius:3px;box-shadow:0 2px 1.5px rgba(0,0,0,0.45),-1px 0 3px rgba(0,0,0,0.12)"></div>
<div class="t" style="left:3515.50px;top:1223.38px;font-size:37.3px;color:#fff;">Contabilizza</div>
<div class="t" style="left:3587.03px;top:1266.38px;font-size:37.3px;color:#fff;">dati</div>
<div class="r" style="left:3487.00px;top:1321.00px;width:260.20px;height:105.50px;background:#68a5f6;border:1px solid rgba(255,255,255,0.85);box-sizing:border-box;border-radius:3px;box-shadow:0 2px 1.5px rgba(0,0,0,0.45),-1px 0 3px rgba(0,0,0,0.12)"></div>
<div class="t" style="left:3549.72px;top:1354.88px;font-size:37.3px;color:#fff;">Prelievo</div>
<div class="r" style="left:3487.00px;top:1431.50px;width:260.20px;height:105.50px;background:#68a5f6;border:1px solid rgba(255,255,255,0.85);box-sizing:border-box;border-radius:3px;box-shadow:0 2px 1.5px rgba(0,0,0,0.45),-1px 0 3px rgba(0,0,0,0.12)"></div>
<div class="t" style="left:3519.66px;top:1443.88px;font-size:37.3px;color:#fff;">Inserimento</div>
<div class="t" style="left:3528.98px;top:1486.88px;font-size:37.3px;color:#fff;">prima nota</div>
<div class="r" style="left:3487.00px;top:1541.50px;width:260.20px;height:105.50px;background:#68a5f6;border:1px solid rgba(255,255,255,0.85);box-sizing:border-box;border-radius:3px;box-shadow:0 2px 1.5px rgba(0,0,0,0.45),-1px 0 3px rgba(0,0,0,0.12)"></div>
<div class="t" style="left:3544.52px;top:1553.88px;font-size:37.3px;color:#fff;">Assegna</div>
<div class="t" style="left:3524.83px;top:1596.88px;font-size:37.3px;color:#fff;">quater/sez.</div>
<div class="r" style="left:3.00px;top:1694.00px;width:3754.00px;height:2.00px;background:#6a6a6a"></div>
<div class="r" style="left:17.50px;top:1711.30px;width:259.50px;height:105.70px;background:#68a5f6;border:1px solid rgba(255,255,255,0.85);box-sizing:border-box;border-radius:3px;box-shadow:0 2px 1.5px rgba(0,0,0,0.45),-1px 0 3px rgba(0,0,0,0.12)"></div>
<div class="t" style="left:29.07px;top:1745.28px;font-size:37.3px;color:#fff;">Gestione viste</div>
<div class="r" style="left:281.40px;top:1711.30px;width:259.10px;height:105.70px;background:#68a5f6;border:1px solid rgba(255,255,255,0.85);box-sizing:border-box;border-radius:3px;box-shadow:0 2px 1.5px rgba(0,0,0,0.45),-1px 0 3px rgba(0,0,0,0.12)"></div>
<div class="t" style="left:291.73px;top:1745.28px;font-size:37.3px;color:#fff;">Stampa griglia</div>
<div class="r" style="left:545.30px;top:1711.30px;width:259.40px;height:105.70px;background:#68a5f6;border:1px solid rgba(255,255,255,0.85);box-sizing:border-box;border-radius:3px;box-shadow:0 2px 1.5px rgba(0,0,0,0.45),-1px 0 3px rgba(0,0,0,0.12)"></div>
<div class="t" style="left:566.16px;top:1745.28px;font-size:37.3px;color:#fff;">Export griglia</div>
<div class="r" style="left:809.00px;top:1711.30px;width:259.80px;height:105.70px;background:#c2c2c2;border:1px solid rgba(255,255,255,0.85);box-sizing:border-box;border-radius:3px;box-shadow:0 2px 1.5px rgba(0,0,0,0.45),-1px 0 3px rgba(0,0,0,0.12)"></div>
<div class="t" style="left:852.16px;top:1723.78px;font-size:37.3px;color:#fff;">Variazione</div>
<div class="t" style="left:846.62px;top:1766.78px;font-size:37.3px;color:#fff;">documento</div>
<div class="r" style="left:1073.00px;top:1711.30px;width:259.80px;height:105.70px;background:#c2c2c2;border:1px solid rgba(255,255,255,0.85);box-sizing:border-box;border-radius:3px;box-shadow:0 2px 1.5px rgba(0,0,0,0.45),-1px 0 3px rgba(0,0,0,0.12)"></div>
<div class="t" style="left:1138.63px;top:1723.78px;font-size:37.3px;color:#fff;">Stampa</div>
<div class="t" style="left:1110.62px;top:1766.78px;font-size:37.3px;color:#fff;">documento</div>
<div class="r" style="left:1337.00px;top:1711.30px;width:259.80px;height:105.70px;background:#68a5f6;border:1px solid rgba(255,255,255,0.85);box-sizing:border-box;border-radius:3px;box-shadow:0 2px 1.5px rgba(0,0,0,0.45),-1px 0 3px rgba(0,0,0,0.12)"></div>
<div class="t" style="left:1359.08px;top:1745.28px;font-size:37.3px;color:#fff;">Altre funzioni</div>
<div class="r" style="left:3224.80px;top:1711.30px;width:259.80px;height:105.70px;background:#68a5f6;border:1px solid rgba(255,255,255,0.85);box-sizing:border-box;border-radius:3px;box-shadow:0 2px 1.5px rgba(0,0,0,0.45),-1px 0 3px rgba(0,0,0,0.12)"></div>
<div class="t" style="left:3319.48px;top:1745.28px;font-size:37.3px;color:#fff"><u style="text-decoration-thickness:2.5px;text-underline-offset:4px">F</u>iltri</div>
<div class="r" style="left:3489.00px;top:1711.30px;width:260.00px;height:105.70px;background:#68a5f6;border:1px solid rgba(255,255,255,0.85);box-sizing:border-box;border-radius:3px;box-shadow:0 2px 1.5px rgba(0,0,0,0.45),-1px 0 3px rgba(0,0,0,0.12)"></div>
<div class="t" style="left:3567.18px;top:1745.28px;font-size:37.3px;color:#fff"><u style="text-decoration-thickness:2.5px;text-underline-offset:4px">U</u>scita</div>
<div class="r" style="left:1164.50px;top:643.00px;width:1436.50px;height:617.80px;background:#fff;box-shadow:0 22px 80px rgba(0,0,0,0.48)"></div>
<div class="r" style="left:1164.50px;top:643.00px;width:1436.50px;height:59.80px;background:#68a5f6"></div>
<svg class="r" style="left:1171px;top:648.5px;" width="41" height="41" viewBox="0 0 41 41"><rect x="1" y="1" width="39" height="39" rx="2.5" fill="#fffdf8" stroke="#c9cdd3" stroke-width="1.6"/><path d="M6 7 L20.5 22.5 L35 7 L35 33.5 L6 33.5 Z" fill="#f0c66c"/><path d="M6 33.5 L20.5 19.5 L35 33.5 Z" fill="#e6a242"/></svg>
<div class="t" style="left:1243.81px;top:658.40px;font-size:28px;color:#000;font-weight:bold;">ECONS - Console per la gestione delle fatture|start: GAMMA versione: 2021.01.03.b coman...</div>
<div class="r" style="left:2547.20px;top:657.20px;width:33.60px;height:33.40px;background:#6aa6f4;border:3px solid #6e8aa6;box-sizing:border-box;border-radius:1px"></div>
<svg class="r" style="left:2552px;top:662px;" width="24" height="24" viewBox="0 0 24 24"><path d="M6.5 6.5 L17.5 17.5 M17.5 6.5 L6.5 17.5" stroke="#e9eef2" stroke-width="5" stroke-linecap="round"/></svg>
<div class="r" style="left:1177.40px;top:734.00px;width:1415.00px;height:307.70px;border:2px solid #a8a8a8;box-sizing:border-box"></div>
<div class="r" style="left:1177.60px;top:754.20px;width:1393.40px;height:104.10px;border:3px solid #e2333d;box-sizing:border-box"></div>
<div class="t" style="left:1200.32px;top:789.83px;font-size:37.3px;color:#000;">Sezionale ditta</div>
<div class="r" style="left:1519.00px;top:789.30px;width:1037.80px;height:45.40px;background:#68a5f6"></div>
<div class="t" style="left:1534.90px;top:793.13px;font-size:37.3px;color:#000;white-space:pre;">113-COMM. E  VENDITA ACCESSOR - Sez. 6-FAT EM AM</div>
<svg class="r" style="left:2532.6px;top:809px;" width="15" height="8.3" viewBox="0 0 15 8.3"><path d="M0 0 H15 L7.5 8.3 Z" fill="#000"/></svg>
<div class="r" style="left:2063.00px;top:1137.00px;width:257.00px;height:55.40px;background:#68a5f6;border:1px solid rgba(255,255,255,0.85);box-sizing:border-box;border-radius:3px;box-shadow:0 2px 1.5px rgba(0,0,0,0.45),-1px 0 3px rgba(0,0,0,0.12)"></div>
<div class="t" style="left:2109.61px;top:1145.83px;font-size:37.3px;color:#fff"><u style="text-decoration-thickness:2.5px;text-underline-offset:4px">C</u>onferma</div>
<div class="r" style="left:2327.20px;top:1137.00px;width:256.80px;height:55.40px;background:#68a5f6;border:1px solid rgba(255,255,255,0.85);box-sizing:border-box;border-radius:3px;box-shadow:0 2px 1.5px rgba(0,0,0,0.45),-1px 0 3px rgba(0,0,0,0.12)"></div>
<div class="t" style="left:2403.78px;top:1145.83px;font-size:37.3px;color:#fff"><u style="text-decoration-thickness:2.5px;text-underline-offset:4px">U</u>scita</div>
<div class="r" style="left:1164.50px;top:1205.00px;width:1421.80px;height:55.80px;background:#d3d3d3"></div>
<div class="r" style="left:2124.30px;top:1205.00px;width:3.00px;height:55.80px;background:#fff"></div>
<div class="r" style="left:2245.30px;top:1205.00px;width:3.00px;height:55.80px;background:#fff"></div>
<div class="r" style="left:2344.00px;top:1205.00px;width:3.00px;height:55.80px;background:#fff"></div>
<div class="t" style="left:2350.48px;top:1212.13px;font-size:37.3px;color:#000;">modifica</div>
<svg class="r" style="left:2005px;top:1020px;" width="180" height="125" viewBox="0 0 180 125"><path d="M9.61 11.58 L149.27 106.79 L146.01 111.71 L165.70 114.60 L155.42 97.55 L152.15 102.46 L10.39 10.42 Z" fill="#f0302e"/></svg>
</body></html>
